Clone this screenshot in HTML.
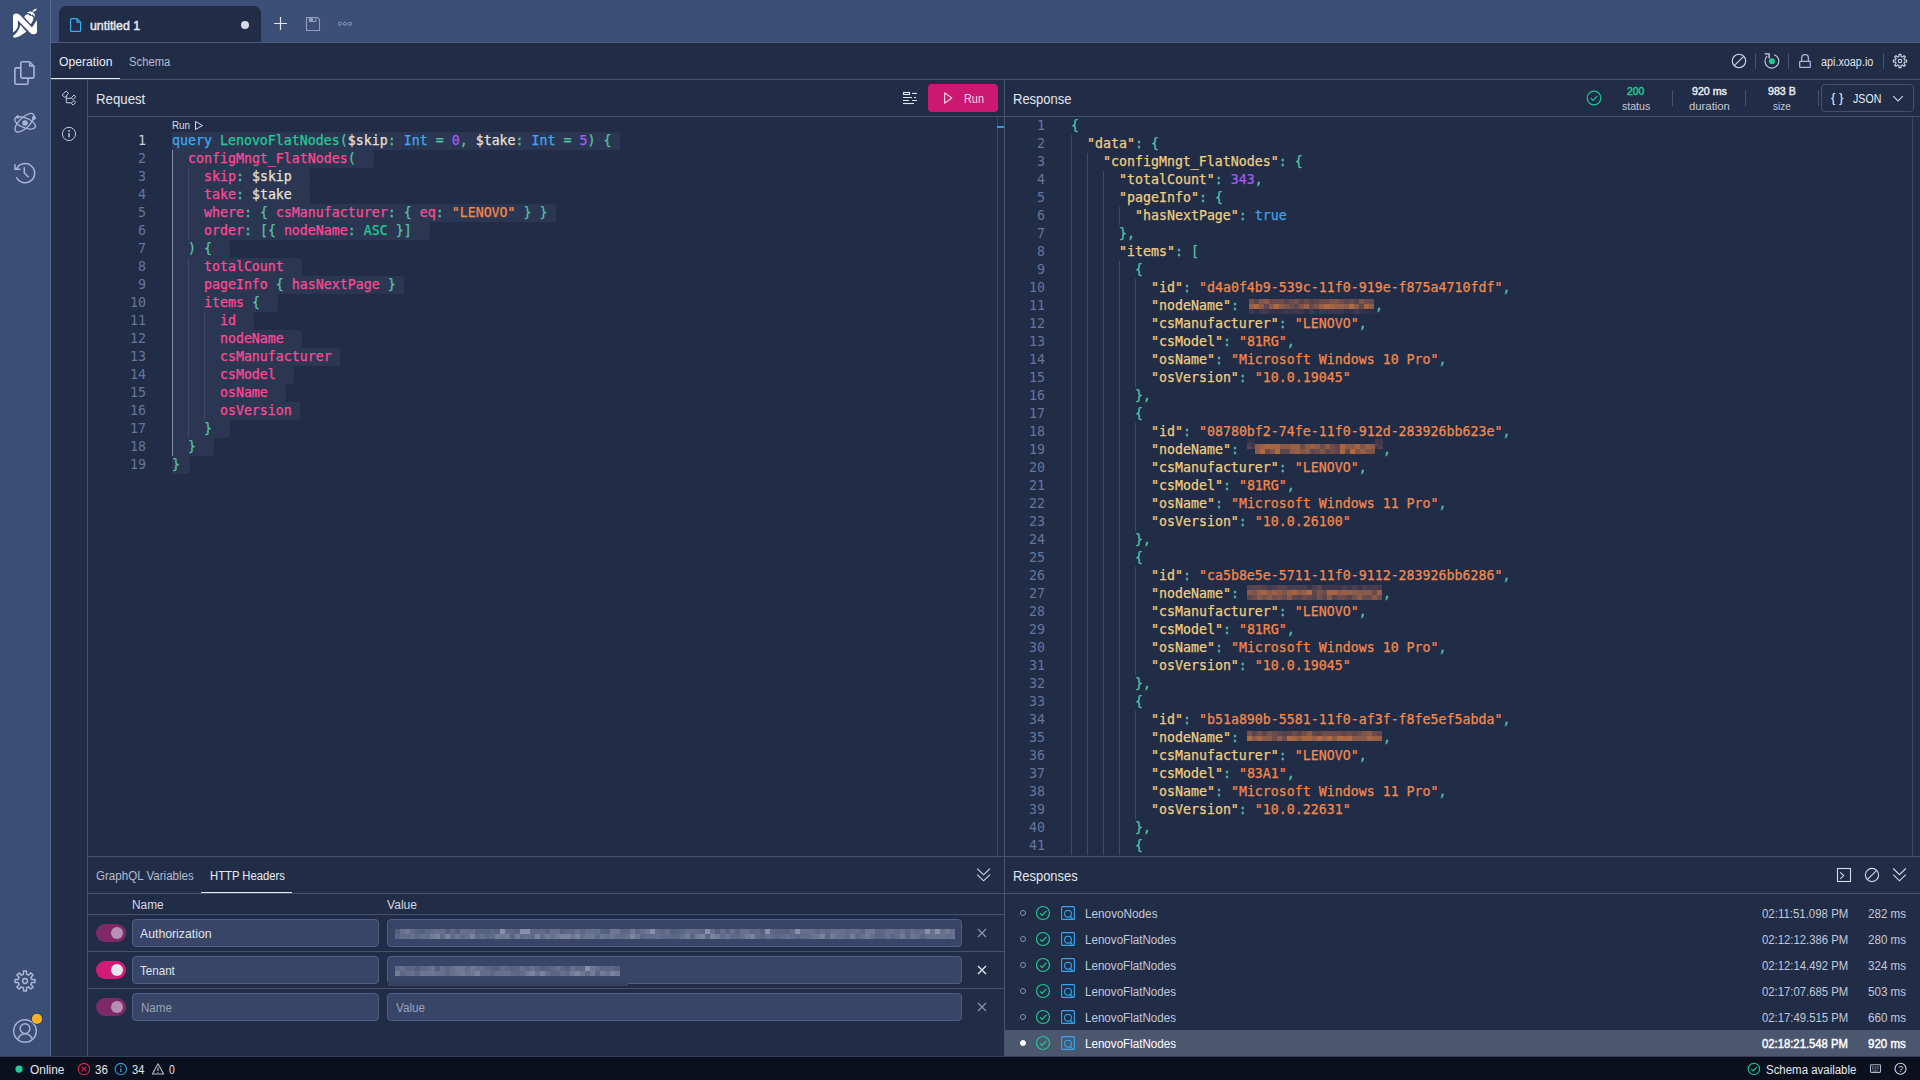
<!DOCTYPE html>
<html lang="en">
<head>
<meta charset="utf-8">
<title>untitled 1</title>
<style>
*{box-sizing:border-box;margin:0;padding:0}
html,body{width:1920px;height:1080px;overflow:hidden;background:#212c47;font-family:"Liberation Sans",sans-serif;color:#d5d9e6;font-size:12px}
.abs,.sel,.ln,.cl,.ig,.mz,.rrow,.txt,.vl,.hl,.ico{position:absolute}
#sidebar{position:absolute;left:0;top:0;width:51px;height:1056px;background:#3b4e75;border-right:1px solid #596a8c}
#topbar{position:absolute;left:51px;top:0;width:1869px;height:43px;background:#3c4f76;border-bottom:1px solid #4d5c7d}
#tab{position:absolute;left:59px;top:6px;width:202px;height:36px;background:#212c47;border-radius:7px 7px 0 0}
#status{position:absolute;left:0;top:1056px;width:1920px;height:24px;background:#0b101e;border-top:1px solid #343f58}
.hl{height:1px;background:#46536f}
.vl{width:1px;background:#46536f}
.txt{white-space:pre;line-height:1}
/* code */
.ln,.cl{font-family:"DejaVu Sans Mono","Liberation Mono",monospace;font-size:13.288px;line-height:18px;height:18px;white-space:pre}
.ln{width:48px;text-align:right;color:#66769a}
.ln.act{color:#c8cee0}
.cl{color:#e8e0d5;-webkit-text-stroke:0.25px}
.sel{left:172px;height:18px;background:#2b3653;border-radius:0 3px 3px 0}
.ig{width:1px;background:#3d4966}
.ig.a{background:#8791b3}
.k{color:#3fa7f2}.f{color:#20cd97}.p{color:#fb4b96}.t{color:#56c4a4}.v{color:#e8e0d5}.n{color:#a45bf4}.s{color:#f5894a}.y{color:#eecf7f}.b{color:#3ea3e6}
/* inputs */
.inp{position:absolute;height:28px;background:#384566;border:1px solid #4f5f86;border-radius:4px;color:#dfe3ee;font-size:13px;line-height:28px;padding-left:8px}
.inp.ph{color:#99a3bd}
.tog{position:absolute;width:30px;height:18px;border-radius:9px;background:#d41b78}
.tog i{position:absolute;right:3px;top:3px;width:12px;height:12px;border-radius:6px;background:#e6e6ee}
.tog.dim{background:#7f2a68}.tog.dim i{background:#b78fb4}
/* responses list */
.rrow{left:1005px;width:915px;height:26px;color:#c3c9da;font-size:12.5px}
.rrow.on{background:#4b566f;color:#fff}
.rrow .dot{position:absolute;left:15px;top:10px;width:6px;height:6px;border-radius:3px;border:1px solid #8892ad}
.rrow.on .dot{background:#fff;border-color:#fff}
.rrow .ck{position:absolute;left:30px;top:5px}
.rrow .qi{position:absolute;left:55px;top:5px}
.rrow .rn{position:absolute;left:79px;top:0;line-height:26px}
.rrow .rt{position:absolute;right:71px;top:0;line-height:26px}
.rrow .rd{position:absolute;right:14px;top:0;line-height:26px}
</style>
</head>
<body>
<div id="sidebar"></div>
<svg class="ico" style="left:0;top:0" width="50" height="50" viewBox="0 0 50 50">
<path d="M13 32.6 L13 16.9 Q13 13.6 16.4 13.6 Q18.5 13.6 19.9 15.1 L32 27.4 L36.9 20.1 L37 31 Q37 34.3 33.6 34.3 Q31.5 34.3 30.1 32.8 L17.9 20.3 L17.9 26.6 Q16.9 30.3 13 32.6 Z" fill="#fff"/>
<path d="M20.5 24.8 L26.3 31.7 Q20.5 36.4 15.2 37.7 Q12.4 37.9 13.4 35.6 Q18.6 32 20.5 24.8 Z" fill="#fff"/>
<path d="M24.2 16.9 Q25 14.6 27.6 14.2 L28.9 14.4 L29.9 16.2 L31 15.6 L32.2 16.3 L33.4 17.4 Q33.9 19.6 30.7 24.2 Z" fill="#fff"/>
<path d="M26.9 12.7 Q29.6 10.6 32.6 12 Q35.4 13.6 34.9 17 L33.6 15.4 L32.2 14.6 L31.2 14.9 L30.2 13.6 L28.8 13.3 Z" fill="#fff"/>
<path d="M32.2 10.9 Q33.6 8.9 36.8 8.4 Q36.8 10.4 34.2 11.5 Q32.9 11.9 32.2 10.9 Z" fill="#fff"/>
</svg>
<svg class="ico" style="left:0;top:50px" width="50" height="50" viewBox="0 50 50 50" fill="none" stroke="#aab5d5" stroke-width="1.6" stroke-linejoin="round">
<path d="M22.3 61.7 H29.5 L34 66.2 V76.6 Q34 78.1 32.5 78.1 H22.3 Q20.8 78.1 20.8 76.6 V63.2 Q20.8 61.7 22.3 61.7 Z"/>
<path d="M29.7 62 V66 H33.8"/>
<path d="M20.8 67.9 H16.4 Q14.9 67.9 14.9 69.4 V82.7 Q14.9 84.2 16.4 84.2 H26.5 Q28 84.2 28 82.7 V78.1"/>
</svg>
<svg class="ico" style="left:0;top:100px" width="50" height="50" viewBox="0 100 50 50" fill="none" stroke="#aab5d5" stroke-width="1.3">
<ellipse cx="24.5" cy="122.7" rx="12.2" ry="5.2" transform="rotate(-44 24.5 122.7)"/>
<ellipse cx="25.1" cy="122.9" rx="11" ry="4.9" transform="rotate(22 25.1 122.9)"/>
<circle cx="25" cy="123" r="2.8" fill="#aab5d5" stroke="none"/>
<circle cx="17.6" cy="116.9" r="1.7" fill="#aab5d5" stroke="none"/>
<circle cx="33.9" cy="118" r="2.1" fill="#aab5d5" stroke="none"/>
</svg>
<svg class="ico" style="left:0;top:150px" width="50" height="50" viewBox="0 150 50 50" fill="none" stroke="#aab5d5" stroke-width="1.5">
<path d="M16.5 168.8 A9.6 9.6 0 1 1 16.4 177.3"/>
<path d="M15 164.2 V169.3 H20.4"/>
<path d="M24.3 167.2 V173 L28.7 177.3"/>
</svg>
<svg class="ico" style="left:0;top:956px" width="50" height="50" viewBox="0 956 50 50" fill="none" stroke="#aab5d5" stroke-width="1.5" stroke-linejoin="round">
<path d="M23.39 974.29 L23.58 971.00 L26.42 971.00 L26.61 974.29 L28.61 975.12 L31.06 972.92 L33.08 974.94 L30.88 977.39 L31.71 979.39 L35.00 979.58 L35.00 982.42 L31.71 982.61 L30.88 984.61 L33.08 987.06 L31.06 989.08 L28.61 986.88 L26.61 987.71 L26.42 991.00 L23.58 991.00 L23.39 987.71 L21.39 986.88 L18.94 989.08 L16.92 987.06 L19.12 984.61 L18.29 982.61 L15.00 982.42 L15.00 979.58 L18.29 979.39 L19.12 977.39 L16.92 974.94 L18.94 972.92 L21.39 975.12 Z"/><circle cx="25" cy="981" r="2.4"/>
</svg>
<svg class="ico" style="left:0;top:1006px" width="50" height="50" viewBox="0 1006 50 50" fill="none" stroke="#aab5d5" stroke-width="1.4">
<circle cx="25" cy="1031" r="11.3"/><circle cx="25" cy="1028.6" r="4.9"/>
<path d="M17.6 1039.6 Q19.8 1033.8 25 1033.8 Q30.2 1033.8 32.4 1039.6"/>
<circle cx="37" cy="1018.9" r="5.9" fill="#24376a" stroke="none"/>
<circle cx="37" cy="1018.9" r="5.1" fill="#f9b224" stroke="none"/>
</svg>
<div id="topbar"></div>
<div id="status"></div>
<div id="tab"></div>
<div class="abs" style="left:241px;top:21px;width:8px;height:8px;border-radius:4px;background:#d8dbe6"></div>

<!-- operation tabs -->
<div class="hl" style="left:51px;top:79px;width:1869px"></div>
<div class="hl" style="left:51px;top:78px;width:69px;background:#e8ebf2"></div>

<!-- left icon col -->
<div class="vl" style="left:87px;top:80px;height:976px"></div>
<!-- request header -->
<div class="hl" style="left:88px;top:116px;width:1832px"></div>
<div class="abs" style="left:928px;top:84px;width:70px;height:28px;border-radius:4px;background:#cc1871"></div>
<div class="vl" style="left:1004px;top:80px;height:976px"></div>
<div class="vl" style="left:997px;top:117px;height:739px;background:#3a4662"></div>
<div class="vl" style="left:1912px;top:117px;height:739px;background:#3a4662"></div>
<div class="abs" style="left:997px;top:126px;width:7px;height:2px;background:#3a9bdc"></div>

<!-- response header -->
<div class="vl" style="left:1672px;top:90px;height:16px"></div>
<div class="vl" style="left:1745px;top:90px;height:16px"></div>
<div class="vl" style="left:1818px;top:90px;height:16px"></div>
<div class="abs" style="left:1821px;top:84px;width:93px;height:28px;border:1px solid #43506e;border-radius:4px"></div>

<!-- editors -->
<div class="sel" style="top:132px;width:448.0px"></div>
<div class="sel" style="top:150px;width:201.7px"></div>
<div class="sel" style="top:168px;width:137.7px"></div>
<div class="sel" style="top:186px;width:137.7px"></div>
<div class="sel" style="top:204px;width:384.0px"></div>
<div class="sel" style="top:222px;width:257.7px"></div>
<div class="sel" style="top:240px;width:57.7px"></div>
<div class="sel" style="top:258px;width:129.7px"></div>
<div class="sel" style="top:276px;width:232.0px"></div>
<div class="sel" style="top:294px;width:105.7px"></div>
<div class="sel" style="top:312px;width:81.7px"></div>
<div class="sel" style="top:330px;width:129.7px"></div>
<div class="sel" style="top:348px;width:168.0px"></div>
<div class="sel" style="top:366px;width:121.7px"></div>
<div class="sel" style="top:384px;width:113.7px"></div>
<div class="sel" style="top:402px;width:128.0px"></div>
<div class="sel" style="top:420px;width:57.7px"></div>
<div class="sel" style="top:438px;width:41.7px"></div>
<div class="sel" style="top:456px;width:17.8px"></div>
<div class="ln act" style="top:132px;left:98px">1</div>
<div class="cl" style="top:132px;left:172px"><span class="k">query</span> <span class="f">LenovoFlatNodes</span><span class="t">(</span><span class="v">$skip</span><span class="t">:</span> <span class="k">Int</span> <span class="t">=</span> <span class="n">0</span><span class="t">,</span> <span class="v">$take</span><span class="t">:</span> <span class="k">Int</span> <span class="t">=</span> <span class="n">5</span><span class="t">)</span> <span class="t">{</span></div>
<div class="ln" style="top:150px;left:98px">2</div>
<div class="cl" style="top:150px;left:172px">  <span class="p">configMngt_FlatNodes</span><span class="t">(</span></div>
<div class="ln" style="top:168px;left:98px">3</div>
<div class="cl" style="top:168px;left:172px">    <span class="p">skip</span><span class="t">:</span> <span class="v">$skip</span></div>
<div class="ln" style="top:186px;left:98px">4</div>
<div class="cl" style="top:186px;left:172px">    <span class="p">take</span><span class="t">:</span> <span class="v">$take</span></div>
<div class="ln" style="top:204px;left:98px">5</div>
<div class="cl" style="top:204px;left:172px">    <span class="p">where</span><span class="t">:</span> <span class="t">{</span> <span class="p">csManufacturer</span><span class="t">:</span> <span class="t">{</span> <span class="p">eq</span><span class="t">:</span> <span class="s">"LENOVO"</span> <span class="t">}</span> <span class="t">}</span></div>
<div class="ln" style="top:222px;left:98px">6</div>
<div class="cl" style="top:222px;left:172px">    <span class="p">order</span><span class="t">:</span> <span class="t">[{</span> <span class="p">nodeName</span><span class="t">:</span> <span class="f">ASC</span> <span class="t">}]</span></div>
<div class="ln" style="top:240px;left:98px">7</div>
<div class="cl" style="top:240px;left:172px">  <span class="t">)</span> <span class="t">{</span></div>
<div class="ln" style="top:258px;left:98px">8</div>
<div class="cl" style="top:258px;left:172px">    <span class="p">totalCount</span></div>
<div class="ln" style="top:276px;left:98px">9</div>
<div class="cl" style="top:276px;left:172px">    <span class="p">pageInfo</span> <span class="t">{</span> <span class="p">hasNextPage</span> <span class="t">}</span></div>
<div class="ln" style="top:294px;left:98px">10</div>
<div class="cl" style="top:294px;left:172px">    <span class="p">items</span> <span class="t">{</span></div>
<div class="ln" style="top:312px;left:98px">11</div>
<div class="cl" style="top:312px;left:172px">      <span class="p">id</span></div>
<div class="ln" style="top:330px;left:98px">12</div>
<div class="cl" style="top:330px;left:172px">      <span class="p">nodeName</span></div>
<div class="ln" style="top:348px;left:98px">13</div>
<div class="cl" style="top:348px;left:172px">      <span class="p">csManufacturer</span></div>
<div class="ln" style="top:366px;left:98px">14</div>
<div class="cl" style="top:366px;left:172px">      <span class="p">csModel</span></div>
<div class="ln" style="top:384px;left:98px">15</div>
<div class="cl" style="top:384px;left:172px">      <span class="p">osName</span></div>
<div class="ln" style="top:402px;left:98px">16</div>
<div class="cl" style="top:402px;left:172px">      <span class="p">osVersion</span></div>
<div class="ln" style="top:420px;left:98px">17</div>
<div class="cl" style="top:420px;left:172px">    <span class="t">}</span></div>
<div class="ln" style="top:438px;left:98px">18</div>
<div class="cl" style="top:438px;left:172px">  <span class="t">}</span></div>
<div class="ln" style="top:456px;left:98px">19</div>
<div class="cl" style="top:456px;left:172px"><span class="t">}</span></div>
<div class="ig a" style="left:172px;top:150px;height:306px"></div>
<div class="ig" style="left:188px;top:168px;height:72px"></div>
<div class="ig" style="left:188px;top:258px;height:180px"></div>
<div class="ig" style="left:204px;top:312px;height:108px"></div>
<div class="ln" style="top:117px;left:1005px;width:40px">1</div>
<div class="cl" style="top:117px;left:1071px"><span class="t">{</span></div>
<div class="ln" style="top:135px;left:1005px;width:40px">2</div>
<div class="cl" style="top:135px;left:1087px"><span class="y">"data"</span><span class="t">:</span> <span class="t">{</span></div>
<div class="ig" style="left:1071px;top:135px;height:18px"></div>
<div class="ln" style="top:153px;left:1005px;width:40px">3</div>
<div class="cl" style="top:153px;left:1103px"><span class="y">"configMngt_FlatNodes"</span><span class="t">:</span> <span class="t">{</span></div>
<div class="ig" style="left:1071px;top:153px;height:18px"></div>
<div class="ig" style="left:1087px;top:153px;height:18px"></div>
<div class="ln" style="top:171px;left:1005px;width:40px">4</div>
<div class="cl" style="top:171px;left:1119px"><span class="y">"totalCount"</span><span class="t">:</span> <span class="n">343</span><span class="t">,</span></div>
<div class="ig" style="left:1071px;top:171px;height:18px"></div>
<div class="ig" style="left:1087px;top:171px;height:18px"></div>
<div class="ig" style="left:1103px;top:171px;height:18px"></div>
<div class="ln" style="top:189px;left:1005px;width:40px">5</div>
<div class="cl" style="top:189px;left:1119px"><span class="y">"pageInfo"</span><span class="t">:</span> <span class="t">{</span></div>
<div class="ig" style="left:1071px;top:189px;height:18px"></div>
<div class="ig" style="left:1087px;top:189px;height:18px"></div>
<div class="ig" style="left:1103px;top:189px;height:18px"></div>
<div class="ln" style="top:207px;left:1005px;width:40px">6</div>
<div class="cl" style="top:207px;left:1135px"><span class="y">"hasNextPage"</span><span class="t">:</span> <span class="b">true</span></div>
<div class="ig" style="left:1071px;top:207px;height:18px"></div>
<div class="ig" style="left:1087px;top:207px;height:18px"></div>
<div class="ig" style="left:1103px;top:207px;height:18px"></div>
<div class="ig" style="left:1119px;top:207px;height:18px"></div>
<div class="ln" style="top:225px;left:1005px;width:40px">7</div>
<div class="cl" style="top:225px;left:1119px"><span class="t">},</span></div>
<div class="ig" style="left:1071px;top:225px;height:18px"></div>
<div class="ig" style="left:1087px;top:225px;height:18px"></div>
<div class="ig" style="left:1103px;top:225px;height:18px"></div>
<div class="ln" style="top:243px;left:1005px;width:40px">8</div>
<div class="cl" style="top:243px;left:1119px"><span class="y">"items"</span><span class="t">:</span> <span class="t">[</span></div>
<div class="ig" style="left:1071px;top:243px;height:18px"></div>
<div class="ig" style="left:1087px;top:243px;height:18px"></div>
<div class="ig" style="left:1103px;top:243px;height:18px"></div>
<div class="ln" style="top:261px;left:1005px;width:40px">9</div>
<div class="cl" style="top:261px;left:1135px"><span class="t">{</span></div>
<div class="ig" style="left:1071px;top:261px;height:18px"></div>
<div class="ig" style="left:1087px;top:261px;height:18px"></div>
<div class="ig" style="left:1103px;top:261px;height:18px"></div>
<div class="ig" style="left:1119px;top:261px;height:18px"></div>
<div class="ln" style="top:279px;left:1005px;width:40px">10</div>
<div class="cl" style="top:279px;left:1151px"><span class="y">"id"</span><span class="t">:</span> <span class="s">"d4a0f4b9-539c-11f0-919e-f875a4710fdf"</span><span class="t">,</span></div>
<div class="ig" style="left:1071px;top:279px;height:18px"></div>
<div class="ig" style="left:1087px;top:279px;height:18px"></div>
<div class="ig" style="left:1103px;top:279px;height:18px"></div>
<div class="ig" style="left:1119px;top:279px;height:18px"></div>
<div class="ig" style="left:1135px;top:279px;height:18px"></div>
<div class="ln" style="top:297px;left:1005px;width:40px">11</div>
<svg class="mz" style="left:1249px;top:299px" width="125" height="15" viewBox="0 0 125 15"><rect x="0" y="0" width="5" height="5" fill="#74504a"/><rect x="5" y="0" width="5" height="5" fill="#5f464c"/><rect x="10" y="0" width="5" height="5" fill="#7d5549"/><rect x="15" y="0" width="5" height="5" fill="#8a5a48"/><rect x="20" y="0" width="5" height="5" fill="#6b4b4c"/><rect x="25" y="0" width="5" height="5" fill="#6b4b4c"/><rect x="30" y="0" width="5" height="5" fill="#6b4b4c"/><rect x="35" y="0" width="5" height="5" fill="#56434e"/><rect x="40" y="0" width="5" height="5" fill="#6b4b4c"/><rect x="45" y="0" width="5" height="5" fill="#74504a"/><rect x="50" y="0" width="5" height="5" fill="#56434e"/><rect x="55" y="0" width="5" height="5" fill="#6b4b4c"/><rect x="60" y="0" width="5" height="5" fill="#56434e"/><rect x="65" y="0" width="5" height="5" fill="#5f464c"/><rect x="70" y="0" width="5" height="5" fill="#6b4b4c"/><rect x="75" y="0" width="5" height="5" fill="#6b4b4c"/><rect x="80" y="0" width="5" height="5" fill="#7d5549"/><rect x="85" y="0" width="5" height="5" fill="#7d5549"/><rect x="90" y="0" width="5" height="5" fill="#6b4b4c"/><rect x="95" y="0" width="5" height="5" fill="#5f464c"/><rect x="100" y="0" width="5" height="5" fill="#6b4b4c"/><rect x="105" y="0" width="5" height="5" fill="#56434e"/><rect x="110" y="0" width="5" height="5" fill="#7d5549"/><rect x="115" y="0" width="5" height="5" fill="#6b4b4c"/><rect x="120" y="0" width="5" height="5" fill="#6b4b4c"/><rect x="0" y="5" width="5" height="5" fill="#9a6046"/><rect x="5" y="5" width="5" height="5" fill="#b06a42"/><rect x="10" y="5" width="5" height="5" fill="#8a5a4a"/><rect x="15" y="5" width="5" height="5" fill="#5f464c"/><rect x="20" y="5" width="5" height="5" fill="#8a5a4a"/><rect x="25" y="5" width="5" height="5" fill="#b06a42"/><rect x="30" y="5" width="5" height="5" fill="#8a5a4a"/><rect x="35" y="5" width="5" height="5" fill="#7d5549"/><rect x="40" y="5" width="5" height="5" fill="#6b4b4c"/><rect x="45" y="5" width="5" height="5" fill="#5f464c"/><rect x="50" y="5" width="5" height="5" fill="#7d5549"/><rect x="55" y="5" width="5" height="5" fill="#9a6046"/><rect x="60" y="5" width="5" height="5" fill="#6b4b4c"/><rect x="65" y="5" width="5" height="5" fill="#7d5549"/><rect x="70" y="5" width="5" height="5" fill="#9a6046"/><rect x="75" y="5" width="5" height="5" fill="#b06a42"/><rect x="80" y="5" width="5" height="5" fill="#a86640"/><rect x="85" y="5" width="5" height="5" fill="#9a6046"/><rect x="90" y="5" width="5" height="5" fill="#9a6046"/><rect x="95" y="5" width="5" height="5" fill="#8a5a4a"/><rect x="100" y="5" width="5" height="5" fill="#b06a42"/><rect x="105" y="5" width="5" height="5" fill="#8a5a4a"/><rect x="110" y="5" width="5" height="5" fill="#5f464c"/><rect x="115" y="5" width="5" height="5" fill="#a86640"/><rect x="120" y="5" width="5" height="5" fill="#8a5a4a"/><rect x="0" y="10" width="5" height="5" fill="#3a3850"/><rect x="5" y="10" width="5" height="5" fill="#2c304b"/><rect x="10" y="10" width="5" height="5" fill="#413a4f"/><rect x="15" y="10" width="5" height="5" fill="#413a4f"/><rect x="20" y="10" width="5" height="5" fill="#33334c"/><rect x="25" y="10" width="5" height="5" fill="#33334c"/><rect x="30" y="10" width="5" height="5" fill="#33334c"/><rect x="35" y="10" width="5" height="5" fill="#3a3850"/><rect x="40" y="10" width="5" height="5" fill="#3a3850"/><rect x="45" y="10" width="5" height="5" fill="#413a4f"/><rect x="50" y="10" width="5" height="5" fill="#3a3850"/><rect x="55" y="10" width="5" height="5" fill="#2c304b"/><rect x="60" y="10" width="5" height="5" fill="#413a4f"/><rect x="65" y="10" width="5" height="5" fill="#2c304b"/><rect x="70" y="10" width="5" height="5" fill="#413a4f"/><rect x="75" y="10" width="5" height="5" fill="#3a3850"/><rect x="80" y="10" width="5" height="5" fill="#3a3850"/><rect x="85" y="10" width="5" height="5" fill="#3a3850"/><rect x="90" y="10" width="5" height="5" fill="#3a3850"/><rect x="95" y="10" width="5" height="5" fill="#2c304b"/><rect x="100" y="10" width="5" height="5" fill="#33334c"/><rect x="105" y="10" width="5" height="5" fill="#413a4f"/><rect x="110" y="10" width="5" height="5" fill="#33334c"/><rect x="115" y="10" width="5" height="5" fill="#2c304b"/><rect x="120" y="10" width="5" height="5" fill="#2c304b"/></svg>
<div class="cl" style="top:297px;left:1375px"><span class="t">,</span></div>
<div class="cl" style="top:297px;left:1151px"><span class="y">"nodeName"</span><span class="t">:</span> </div>
<div class="ig" style="left:1071px;top:297px;height:18px"></div>
<div class="ig" style="left:1087px;top:297px;height:18px"></div>
<div class="ig" style="left:1103px;top:297px;height:18px"></div>
<div class="ig" style="left:1119px;top:297px;height:18px"></div>
<div class="ig" style="left:1135px;top:297px;height:18px"></div>
<div class="ln" style="top:315px;left:1005px;width:40px">12</div>
<div class="cl" style="top:315px;left:1151px"><span class="y">"csManufacturer"</span><span class="t">:</span> <span class="s">"LENOVO"</span><span class="t">,</span></div>
<div class="ig" style="left:1071px;top:315px;height:18px"></div>
<div class="ig" style="left:1087px;top:315px;height:18px"></div>
<div class="ig" style="left:1103px;top:315px;height:18px"></div>
<div class="ig" style="left:1119px;top:315px;height:18px"></div>
<div class="ig" style="left:1135px;top:315px;height:18px"></div>
<div class="ln" style="top:333px;left:1005px;width:40px">13</div>
<div class="cl" style="top:333px;left:1151px"><span class="y">"csModel"</span><span class="t">:</span> <span class="s">"81RG"</span><span class="t">,</span></div>
<div class="ig" style="left:1071px;top:333px;height:18px"></div>
<div class="ig" style="left:1087px;top:333px;height:18px"></div>
<div class="ig" style="left:1103px;top:333px;height:18px"></div>
<div class="ig" style="left:1119px;top:333px;height:18px"></div>
<div class="ig" style="left:1135px;top:333px;height:18px"></div>
<div class="ln" style="top:351px;left:1005px;width:40px">14</div>
<div class="cl" style="top:351px;left:1151px"><span class="y">"osName"</span><span class="t">:</span> <span class="s">"Microsoft Windows 10 Pro"</span><span class="t">,</span></div>
<div class="ig" style="left:1071px;top:351px;height:18px"></div>
<div class="ig" style="left:1087px;top:351px;height:18px"></div>
<div class="ig" style="left:1103px;top:351px;height:18px"></div>
<div class="ig" style="left:1119px;top:351px;height:18px"></div>
<div class="ig" style="left:1135px;top:351px;height:18px"></div>
<div class="ln" style="top:369px;left:1005px;width:40px">15</div>
<div class="cl" style="top:369px;left:1151px"><span class="y">"osVersion"</span><span class="t">:</span> <span class="s">"10.0.19045"</span></div>
<div class="ig" style="left:1071px;top:369px;height:18px"></div>
<div class="ig" style="left:1087px;top:369px;height:18px"></div>
<div class="ig" style="left:1103px;top:369px;height:18px"></div>
<div class="ig" style="left:1119px;top:369px;height:18px"></div>
<div class="ig" style="left:1135px;top:369px;height:18px"></div>
<div class="ln" style="top:387px;left:1005px;width:40px">16</div>
<div class="cl" style="top:387px;left:1135px"><span class="t">},</span></div>
<div class="ig" style="left:1071px;top:387px;height:18px"></div>
<div class="ig" style="left:1087px;top:387px;height:18px"></div>
<div class="ig" style="left:1103px;top:387px;height:18px"></div>
<div class="ig" style="left:1119px;top:387px;height:18px"></div>
<div class="ln" style="top:405px;left:1005px;width:40px">17</div>
<div class="cl" style="top:405px;left:1135px"><span class="t">{</span></div>
<div class="ig" style="left:1071px;top:405px;height:18px"></div>
<div class="ig" style="left:1087px;top:405px;height:18px"></div>
<div class="ig" style="left:1103px;top:405px;height:18px"></div>
<div class="ig" style="left:1119px;top:405px;height:18px"></div>
<div class="ln" style="top:423px;left:1005px;width:40px">18</div>
<div class="cl" style="top:423px;left:1151px"><span class="y">"id"</span><span class="t">:</span> <span class="s">"08780bf2-74fe-11f0-912d-283926bb623e"</span><span class="t">,</span></div>
<div class="ig" style="left:1071px;top:423px;height:18px"></div>
<div class="ig" style="left:1087px;top:423px;height:18px"></div>
<div class="ig" style="left:1103px;top:423px;height:18px"></div>
<div class="ig" style="left:1119px;top:423px;height:18px"></div>
<div class="ig" style="left:1135px;top:423px;height:18px"></div>
<div class="ln" style="top:441px;left:1005px;width:40px">19</div>
<svg class="mz" style="left:1255px;top:444px" width="120" height="10" viewBox="0 0 120 10"><rect x="0" y="0" width="5" height="5" fill="#8a5a4a"/><rect x="5" y="0" width="5" height="5" fill="#9a6046"/><rect x="10" y="0" width="5" height="5" fill="#a86640"/><rect x="15" y="0" width="5" height="5" fill="#a86640"/><rect x="20" y="0" width="5" height="5" fill="#a86640"/><rect x="25" y="0" width="5" height="5" fill="#8a5a4a"/><rect x="30" y="0" width="5" height="5" fill="#8a5a4a"/><rect x="35" y="0" width="5" height="5" fill="#9a6046"/><rect x="40" y="0" width="5" height="5" fill="#9a6046"/><rect x="45" y="0" width="5" height="5" fill="#6b4b4c"/><rect x="50" y="0" width="5" height="5" fill="#8a5a4a"/><rect x="55" y="0" width="5" height="5" fill="#9a6046"/><rect x="60" y="0" width="5" height="5" fill="#8a5a4a"/><rect x="65" y="0" width="5" height="5" fill="#6b4b4c"/><rect x="70" y="0" width="5" height="5" fill="#8a5a4a"/><rect x="75" y="0" width="5" height="5" fill="#6b4b4c"/><rect x="80" y="0" width="5" height="5" fill="#5f464c"/><rect x="85" y="0" width="5" height="5" fill="#a86640"/><rect x="90" y="0" width="5" height="5" fill="#8a5a4a"/><rect x="95" y="0" width="5" height="5" fill="#8a5a4a"/><rect x="100" y="0" width="5" height="5" fill="#a86640"/><rect x="105" y="0" width="5" height="5" fill="#7d5549"/><rect x="110" y="0" width="5" height="5" fill="#9a6046"/><rect x="115" y="0" width="5" height="5" fill="#8a5a4a"/><rect x="0" y="5" width="5" height="5" fill="#8a5a4a"/><rect x="5" y="5" width="5" height="5" fill="#b06a42"/><rect x="10" y="5" width="5" height="5" fill="#6b4b4c"/><rect x="15" y="5" width="5" height="5" fill="#7d5549"/><rect x="20" y="5" width="5" height="5" fill="#b06a42"/><rect x="25" y="5" width="5" height="5" fill="#5f464c"/><rect x="30" y="5" width="5" height="5" fill="#5f464c"/><rect x="35" y="5" width="5" height="5" fill="#8a5a4a"/><rect x="40" y="5" width="5" height="5" fill="#9a6046"/><rect x="45" y="5" width="5" height="5" fill="#7d5549"/><rect x="50" y="5" width="5" height="5" fill="#8a5a4a"/><rect x="55" y="5" width="5" height="5" fill="#5f464c"/><rect x="60" y="5" width="5" height="5" fill="#6b4b4c"/><rect x="65" y="5" width="5" height="5" fill="#7d5549"/><rect x="70" y="5" width="5" height="5" fill="#5f464c"/><rect x="75" y="5" width="5" height="5" fill="#6b4b4c"/><rect x="80" y="5" width="5" height="5" fill="#5f464c"/><rect x="85" y="5" width="5" height="5" fill="#a86640"/><rect x="90" y="5" width="5" height="5" fill="#5f464c"/><rect x="95" y="5" width="5" height="5" fill="#b06a42"/><rect x="100" y="5" width="5" height="5" fill="#7d5549"/><rect x="105" y="5" width="5" height="5" fill="#9a6046"/><rect x="110" y="5" width="5" height="5" fill="#7d5549"/><rect x="115" y="5" width="5" height="5" fill="#7d5549"/></svg>
<svg class="mz" style="left:1247px;top:439px" width="8" height="10" viewBox="0 0 8 10"><rect x="0" y="0" width="4" height="4" fill="#33334c"/><rect x="4" y="0" width="4" height="4" fill="#33334c"/><rect x="0" y="4" width="4" height="4" fill="#4a3f50"/><rect x="4" y="4" width="4" height="4" fill="#3e374c"/><rect x="0" y="8" width="4" height="4" fill="#5a4650"/><rect x="4" y="8" width="4" height="4" fill="#453b4e"/></svg>
<svg class="mz" style="left:1375px;top:439px" width="8" height="10" viewBox="0 0 8 10"><rect x="0" y="0" width="4" height="4" fill="#413a4f"/><rect x="4" y="0" width="4" height="4" fill="#413a4f"/><rect x="0" y="4" width="4" height="4" fill="#4a3f50"/><rect x="4" y="4" width="4" height="4" fill="#453b4e"/><rect x="0" y="8" width="4" height="4" fill="#3e374c"/><rect x="4" y="8" width="4" height="4" fill="#5a4650"/></svg>
<div class="cl" style="top:441px;left:1383px"><span class="t">,</span></div>
<div class="cl" style="top:441px;left:1151px"><span class="y">"nodeName"</span><span class="t">:</span> </div>
<div class="ig" style="left:1071px;top:441px;height:18px"></div>
<div class="ig" style="left:1087px;top:441px;height:18px"></div>
<div class="ig" style="left:1103px;top:441px;height:18px"></div>
<div class="ig" style="left:1119px;top:441px;height:18px"></div>
<div class="ig" style="left:1135px;top:441px;height:18px"></div>
<div class="ln" style="top:459px;left:1005px;width:40px">20</div>
<div class="cl" style="top:459px;left:1151px"><span class="y">"csManufacturer"</span><span class="t">:</span> <span class="s">"LENOVO"</span><span class="t">,</span></div>
<div class="ig" style="left:1071px;top:459px;height:18px"></div>
<div class="ig" style="left:1087px;top:459px;height:18px"></div>
<div class="ig" style="left:1103px;top:459px;height:18px"></div>
<div class="ig" style="left:1119px;top:459px;height:18px"></div>
<div class="ig" style="left:1135px;top:459px;height:18px"></div>
<div class="ln" style="top:477px;left:1005px;width:40px">21</div>
<div class="cl" style="top:477px;left:1151px"><span class="y">"csModel"</span><span class="t">:</span> <span class="s">"81RG"</span><span class="t">,</span></div>
<div class="ig" style="left:1071px;top:477px;height:18px"></div>
<div class="ig" style="left:1087px;top:477px;height:18px"></div>
<div class="ig" style="left:1103px;top:477px;height:18px"></div>
<div class="ig" style="left:1119px;top:477px;height:18px"></div>
<div class="ig" style="left:1135px;top:477px;height:18px"></div>
<div class="ln" style="top:495px;left:1005px;width:40px">22</div>
<div class="cl" style="top:495px;left:1151px"><span class="y">"osName"</span><span class="t">:</span> <span class="s">"Microsoft Windows 11 Pro"</span><span class="t">,</span></div>
<div class="ig" style="left:1071px;top:495px;height:18px"></div>
<div class="ig" style="left:1087px;top:495px;height:18px"></div>
<div class="ig" style="left:1103px;top:495px;height:18px"></div>
<div class="ig" style="left:1119px;top:495px;height:18px"></div>
<div class="ig" style="left:1135px;top:495px;height:18px"></div>
<div class="ln" style="top:513px;left:1005px;width:40px">23</div>
<div class="cl" style="top:513px;left:1151px"><span class="y">"osVersion"</span><span class="t">:</span> <span class="s">"10.0.26100"</span></div>
<div class="ig" style="left:1071px;top:513px;height:18px"></div>
<div class="ig" style="left:1087px;top:513px;height:18px"></div>
<div class="ig" style="left:1103px;top:513px;height:18px"></div>
<div class="ig" style="left:1119px;top:513px;height:18px"></div>
<div class="ig" style="left:1135px;top:513px;height:18px"></div>
<div class="ln" style="top:531px;left:1005px;width:40px">24</div>
<div class="cl" style="top:531px;left:1135px"><span class="t">},</span></div>
<div class="ig" style="left:1071px;top:531px;height:18px"></div>
<div class="ig" style="left:1087px;top:531px;height:18px"></div>
<div class="ig" style="left:1103px;top:531px;height:18px"></div>
<div class="ig" style="left:1119px;top:531px;height:18px"></div>
<div class="ln" style="top:549px;left:1005px;width:40px">25</div>
<div class="cl" style="top:549px;left:1135px"><span class="t">{</span></div>
<div class="ig" style="left:1071px;top:549px;height:18px"></div>
<div class="ig" style="left:1087px;top:549px;height:18px"></div>
<div class="ig" style="left:1103px;top:549px;height:18px"></div>
<div class="ig" style="left:1119px;top:549px;height:18px"></div>
<div class="ln" style="top:567px;left:1005px;width:40px">26</div>
<div class="cl" style="top:567px;left:1151px"><span class="y">"id"</span><span class="t">:</span> <span class="s">"ca5b8e5e-5711-11f0-9112-283926bb6286"</span><span class="t">,</span></div>
<div class="ig" style="left:1071px;top:567px;height:18px"></div>
<div class="ig" style="left:1087px;top:567px;height:18px"></div>
<div class="ig" style="left:1103px;top:567px;height:18px"></div>
<div class="ig" style="left:1119px;top:567px;height:18px"></div>
<div class="ig" style="left:1135px;top:567px;height:18px"></div>
<div class="ln" style="top:585px;left:1005px;width:40px">27</div>
<svg class="mz" style="left:1247px;top:585px" width="135" height="15" viewBox="0 0 135 15"><rect x="0" y="0" width="5" height="5" fill="#52434f"/><rect x="5" y="0" width="5" height="5" fill="#5a4650"/><rect x="10" y="0" width="5" height="5" fill="#5a4650"/><rect x="15" y="0" width="5" height="5" fill="#52434f"/><rect x="20" y="0" width="5" height="5" fill="#453b4e"/><rect x="25" y="0" width="5" height="5" fill="#4a3f50"/><rect x="30" y="0" width="5" height="5" fill="#5a4650"/><rect x="35" y="0" width="5" height="5" fill="#5a4650"/><rect x="40" y="0" width="5" height="5" fill="#4a3f50"/><rect x="45" y="0" width="5" height="5" fill="#4a3f50"/><rect x="50" y="0" width="5" height="5" fill="#4a3f50"/><rect x="55" y="0" width="5" height="5" fill="#4a3f50"/><rect x="60" y="0" width="5" height="5" fill="#3e374c"/><rect x="65" y="0" width="5" height="5" fill="#4a3f50"/><rect x="70" y="0" width="5" height="5" fill="#5a4650"/><rect x="75" y="0" width="5" height="5" fill="#3e374c"/><rect x="80" y="0" width="5" height="5" fill="#3e374c"/><rect x="85" y="0" width="5" height="5" fill="#3e374c"/><rect x="90" y="0" width="5" height="5" fill="#3e374c"/><rect x="95" y="0" width="5" height="5" fill="#4a3f50"/><rect x="100" y="0" width="5" height="5" fill="#3e374c"/><rect x="105" y="0" width="5" height="5" fill="#4a3f50"/><rect x="110" y="0" width="5" height="5" fill="#3e374c"/><rect x="115" y="0" width="5" height="5" fill="#4a3f50"/><rect x="120" y="0" width="5" height="5" fill="#453b4e"/><rect x="125" y="0" width="5" height="5" fill="#4a3f50"/><rect x="130" y="0" width="5" height="5" fill="#453b4e"/><rect x="0" y="5" width="5" height="5" fill="#8a5a4a"/><rect x="5" y="5" width="5" height="5" fill="#7d5549"/><rect x="10" y="5" width="5" height="5" fill="#9a6046"/><rect x="15" y="5" width="5" height="5" fill="#a86640"/><rect x="20" y="5" width="5" height="5" fill="#8a5a4a"/><rect x="25" y="5" width="5" height="5" fill="#9a6046"/><rect x="30" y="5" width="5" height="5" fill="#8a5a4a"/><rect x="35" y="5" width="5" height="5" fill="#7d5549"/><rect x="40" y="5" width="5" height="5" fill="#9a6046"/><rect x="45" y="5" width="5" height="5" fill="#a86640"/><rect x="50" y="5" width="5" height="5" fill="#8a5a4a"/><rect x="55" y="5" width="5" height="5" fill="#9a6046"/><rect x="60" y="5" width="5" height="5" fill="#b06a42"/><rect x="65" y="5" width="5" height="5" fill="#5f464c"/><rect x="70" y="5" width="5" height="5" fill="#7d5549"/><rect x="75" y="5" width="5" height="5" fill="#6b4b4c"/><rect x="80" y="5" width="5" height="5" fill="#a86640"/><rect x="85" y="5" width="5" height="5" fill="#a86640"/><rect x="90" y="5" width="5" height="5" fill="#8a5a4a"/><rect x="95" y="5" width="5" height="5" fill="#9a6046"/><rect x="100" y="5" width="5" height="5" fill="#9a6046"/><rect x="105" y="5" width="5" height="5" fill="#8a5a4a"/><rect x="110" y="5" width="5" height="5" fill="#8a5a4a"/><rect x="115" y="5" width="5" height="5" fill="#8a5a4a"/><rect x="120" y="5" width="5" height="5" fill="#8a5a4a"/><rect x="125" y="5" width="5" height="5" fill="#6b4b4c"/><rect x="130" y="5" width="5" height="5" fill="#9a6046"/><rect x="0" y="10" width="5" height="5" fill="#5f464c"/><rect x="5" y="10" width="5" height="5" fill="#6b4b4c"/><rect x="10" y="10" width="5" height="5" fill="#8a5a48"/><rect x="15" y="10" width="5" height="5" fill="#74504a"/><rect x="20" y="10" width="5" height="5" fill="#8a5a48"/><rect x="25" y="10" width="5" height="5" fill="#74504a"/><rect x="30" y="10" width="5" height="5" fill="#7d5549"/><rect x="35" y="10" width="5" height="5" fill="#6b4b4c"/><rect x="40" y="10" width="5" height="5" fill="#8a5a48"/><rect x="45" y="10" width="5" height="5" fill="#5f464c"/><rect x="50" y="10" width="5" height="5" fill="#56434e"/><rect x="55" y="10" width="5" height="5" fill="#6b4b4c"/><rect x="60" y="10" width="5" height="5" fill="#5f464c"/><rect x="65" y="10" width="5" height="5" fill="#56434e"/><rect x="70" y="10" width="5" height="5" fill="#74504a"/><rect x="75" y="10" width="5" height="5" fill="#5f464c"/><rect x="80" y="10" width="5" height="5" fill="#8a5a48"/><rect x="85" y="10" width="5" height="5" fill="#56434e"/><rect x="90" y="10" width="5" height="5" fill="#6b4b4c"/><rect x="95" y="10" width="5" height="5" fill="#6b4b4c"/><rect x="100" y="10" width="5" height="5" fill="#56434e"/><rect x="105" y="10" width="5" height="5" fill="#74504a"/><rect x="110" y="10" width="5" height="5" fill="#8a5a48"/><rect x="115" y="10" width="5" height="5" fill="#6b4b4c"/><rect x="120" y="10" width="5" height="5" fill="#6b4b4c"/><rect x="125" y="10" width="5" height="5" fill="#8a5a48"/><rect x="130" y="10" width="5" height="5" fill="#6b4b4c"/></svg>
<div class="cl" style="top:585px;left:1383px"><span class="t">,</span></div>
<div class="cl" style="top:585px;left:1151px"><span class="y">"nodeName"</span><span class="t">:</span> </div>
<div class="ig" style="left:1071px;top:585px;height:18px"></div>
<div class="ig" style="left:1087px;top:585px;height:18px"></div>
<div class="ig" style="left:1103px;top:585px;height:18px"></div>
<div class="ig" style="left:1119px;top:585px;height:18px"></div>
<div class="ig" style="left:1135px;top:585px;height:18px"></div>
<div class="ln" style="top:603px;left:1005px;width:40px">28</div>
<div class="cl" style="top:603px;left:1151px"><span class="y">"csManufacturer"</span><span class="t">:</span> <span class="s">"LENOVO"</span><span class="t">,</span></div>
<div class="ig" style="left:1071px;top:603px;height:18px"></div>
<div class="ig" style="left:1087px;top:603px;height:18px"></div>
<div class="ig" style="left:1103px;top:603px;height:18px"></div>
<div class="ig" style="left:1119px;top:603px;height:18px"></div>
<div class="ig" style="left:1135px;top:603px;height:18px"></div>
<div class="ln" style="top:621px;left:1005px;width:40px">29</div>
<div class="cl" style="top:621px;left:1151px"><span class="y">"csModel"</span><span class="t">:</span> <span class="s">"81RG"</span><span class="t">,</span></div>
<div class="ig" style="left:1071px;top:621px;height:18px"></div>
<div class="ig" style="left:1087px;top:621px;height:18px"></div>
<div class="ig" style="left:1103px;top:621px;height:18px"></div>
<div class="ig" style="left:1119px;top:621px;height:18px"></div>
<div class="ig" style="left:1135px;top:621px;height:18px"></div>
<div class="ln" style="top:639px;left:1005px;width:40px">30</div>
<div class="cl" style="top:639px;left:1151px"><span class="y">"osName"</span><span class="t">:</span> <span class="s">"Microsoft Windows 10 Pro"</span><span class="t">,</span></div>
<div class="ig" style="left:1071px;top:639px;height:18px"></div>
<div class="ig" style="left:1087px;top:639px;height:18px"></div>
<div class="ig" style="left:1103px;top:639px;height:18px"></div>
<div class="ig" style="left:1119px;top:639px;height:18px"></div>
<div class="ig" style="left:1135px;top:639px;height:18px"></div>
<div class="ln" style="top:657px;left:1005px;width:40px">31</div>
<div class="cl" style="top:657px;left:1151px"><span class="y">"osVersion"</span><span class="t">:</span> <span class="s">"10.0.19045"</span></div>
<div class="ig" style="left:1071px;top:657px;height:18px"></div>
<div class="ig" style="left:1087px;top:657px;height:18px"></div>
<div class="ig" style="left:1103px;top:657px;height:18px"></div>
<div class="ig" style="left:1119px;top:657px;height:18px"></div>
<div class="ig" style="left:1135px;top:657px;height:18px"></div>
<div class="ln" style="top:675px;left:1005px;width:40px">32</div>
<div class="cl" style="top:675px;left:1135px"><span class="t">},</span></div>
<div class="ig" style="left:1071px;top:675px;height:18px"></div>
<div class="ig" style="left:1087px;top:675px;height:18px"></div>
<div class="ig" style="left:1103px;top:675px;height:18px"></div>
<div class="ig" style="left:1119px;top:675px;height:18px"></div>
<div class="ln" style="top:693px;left:1005px;width:40px">33</div>
<div class="cl" style="top:693px;left:1135px"><span class="t">{</span></div>
<div class="ig" style="left:1071px;top:693px;height:18px"></div>
<div class="ig" style="left:1087px;top:693px;height:18px"></div>
<div class="ig" style="left:1103px;top:693px;height:18px"></div>
<div class="ig" style="left:1119px;top:693px;height:18px"></div>
<div class="ln" style="top:711px;left:1005px;width:40px">34</div>
<div class="cl" style="top:711px;left:1151px"><span class="y">"id"</span><span class="t">:</span> <span class="s">"b51a890b-5581-11f0-af3f-f8fe5ef5abda"</span><span class="t">,</span></div>
<div class="ig" style="left:1071px;top:711px;height:18px"></div>
<div class="ig" style="left:1087px;top:711px;height:18px"></div>
<div class="ig" style="left:1103px;top:711px;height:18px"></div>
<div class="ig" style="left:1119px;top:711px;height:18px"></div>
<div class="ig" style="left:1135px;top:711px;height:18px"></div>
<div class="ln" style="top:729px;left:1005px;width:40px">35</div>
<svg class="mz" style="left:1247px;top:731px" width="135" height="10" viewBox="0 0 135 10"><rect x="0" y="0" width="5" height="5" fill="#74504a"/><rect x="5" y="0" width="5" height="5" fill="#56434e"/><rect x="10" y="0" width="5" height="5" fill="#74504a"/><rect x="15" y="0" width="5" height="5" fill="#5f464c"/><rect x="20" y="0" width="5" height="5" fill="#74504a"/><rect x="25" y="0" width="5" height="5" fill="#6b4b4c"/><rect x="30" y="0" width="5" height="5" fill="#5f464c"/><rect x="35" y="0" width="5" height="5" fill="#56434e"/><rect x="40" y="0" width="5" height="5" fill="#56434e"/><rect x="45" y="0" width="5" height="5" fill="#6b4b4c"/><rect x="50" y="0" width="5" height="5" fill="#56434e"/><rect x="55" y="0" width="5" height="5" fill="#74504a"/><rect x="60" y="0" width="5" height="5" fill="#8a5a48"/><rect x="65" y="0" width="5" height="5" fill="#5f464c"/><rect x="70" y="0" width="5" height="5" fill="#56434e"/><rect x="75" y="0" width="5" height="5" fill="#6b4b4c"/><rect x="80" y="0" width="5" height="5" fill="#6b4b4c"/><rect x="85" y="0" width="5" height="5" fill="#6b4b4c"/><rect x="90" y="0" width="5" height="5" fill="#6b4b4c"/><rect x="95" y="0" width="5" height="5" fill="#5f464c"/><rect x="100" y="0" width="5" height="5" fill="#6b4b4c"/><rect x="105" y="0" width="5" height="5" fill="#5f464c"/><rect x="110" y="0" width="5" height="5" fill="#6b4b4c"/><rect x="115" y="0" width="5" height="5" fill="#7d5549"/><rect x="120" y="0" width="5" height="5" fill="#8a5a48"/><rect x="125" y="0" width="5" height="5" fill="#6b4b4c"/><rect x="130" y="0" width="5" height="5" fill="#5f464c"/><rect x="0" y="5" width="5" height="5" fill="#b06a42"/><rect x="5" y="5" width="5" height="5" fill="#8a5a4a"/><rect x="10" y="5" width="5" height="5" fill="#a86640"/><rect x="15" y="5" width="5" height="5" fill="#8a5a4a"/><rect x="20" y="5" width="5" height="5" fill="#8a5a4a"/><rect x="25" y="5" width="5" height="5" fill="#6b4b4c"/><rect x="30" y="5" width="5" height="5" fill="#8a5a4a"/><rect x="35" y="5" width="5" height="5" fill="#6b4b4c"/><rect x="40" y="5" width="5" height="5" fill="#b06a42"/><rect x="45" y="5" width="5" height="5" fill="#a86640"/><rect x="50" y="5" width="5" height="5" fill="#8a5a4a"/><rect x="55" y="5" width="5" height="5" fill="#a86640"/><rect x="60" y="5" width="5" height="5" fill="#a86640"/><rect x="65" y="5" width="5" height="5" fill="#9a6046"/><rect x="70" y="5" width="5" height="5" fill="#b06a42"/><rect x="75" y="5" width="5" height="5" fill="#9a6046"/><rect x="80" y="5" width="5" height="5" fill="#b06a42"/><rect x="85" y="5" width="5" height="5" fill="#8a5a4a"/><rect x="90" y="5" width="5" height="5" fill="#b06a42"/><rect x="95" y="5" width="5" height="5" fill="#a86640"/><rect x="100" y="5" width="5" height="5" fill="#b06a42"/><rect x="105" y="5" width="5" height="5" fill="#8a5a4a"/><rect x="110" y="5" width="5" height="5" fill="#8a5a4a"/><rect x="115" y="5" width="5" height="5" fill="#8a5a4a"/><rect x="120" y="5" width="5" height="5" fill="#a86640"/><rect x="125" y="5" width="5" height="5" fill="#9a6046"/><rect x="130" y="5" width="5" height="5" fill="#9a6046"/></svg>
<div class="cl" style="top:729px;left:1383px"><span class="t">,</span></div>
<div class="cl" style="top:729px;left:1151px"><span class="y">"nodeName"</span><span class="t">:</span> </div>
<div class="ig" style="left:1071px;top:729px;height:18px"></div>
<div class="ig" style="left:1087px;top:729px;height:18px"></div>
<div class="ig" style="left:1103px;top:729px;height:18px"></div>
<div class="ig" style="left:1119px;top:729px;height:18px"></div>
<div class="ig" style="left:1135px;top:729px;height:18px"></div>
<div class="ln" style="top:747px;left:1005px;width:40px">36</div>
<div class="cl" style="top:747px;left:1151px"><span class="y">"csManufacturer"</span><span class="t">:</span> <span class="s">"LENOVO"</span><span class="t">,</span></div>
<div class="ig" style="left:1071px;top:747px;height:18px"></div>
<div class="ig" style="left:1087px;top:747px;height:18px"></div>
<div class="ig" style="left:1103px;top:747px;height:18px"></div>
<div class="ig" style="left:1119px;top:747px;height:18px"></div>
<div class="ig" style="left:1135px;top:747px;height:18px"></div>
<div class="ln" style="top:765px;left:1005px;width:40px">37</div>
<div class="cl" style="top:765px;left:1151px"><span class="y">"csModel"</span><span class="t">:</span> <span class="s">"83A1"</span><span class="t">,</span></div>
<div class="ig" style="left:1071px;top:765px;height:18px"></div>
<div class="ig" style="left:1087px;top:765px;height:18px"></div>
<div class="ig" style="left:1103px;top:765px;height:18px"></div>
<div class="ig" style="left:1119px;top:765px;height:18px"></div>
<div class="ig" style="left:1135px;top:765px;height:18px"></div>
<div class="ln" style="top:783px;left:1005px;width:40px">38</div>
<div class="cl" style="top:783px;left:1151px"><span class="y">"osName"</span><span class="t">:</span> <span class="s">"Microsoft Windows 11 Pro"</span><span class="t">,</span></div>
<div class="ig" style="left:1071px;top:783px;height:18px"></div>
<div class="ig" style="left:1087px;top:783px;height:18px"></div>
<div class="ig" style="left:1103px;top:783px;height:18px"></div>
<div class="ig" style="left:1119px;top:783px;height:18px"></div>
<div class="ig" style="left:1135px;top:783px;height:18px"></div>
<div class="ln" style="top:801px;left:1005px;width:40px">39</div>
<div class="cl" style="top:801px;left:1151px"><span class="y">"osVersion"</span><span class="t">:</span> <span class="s">"10.0.22631"</span></div>
<div class="ig" style="left:1071px;top:801px;height:18px"></div>
<div class="ig" style="left:1087px;top:801px;height:18px"></div>
<div class="ig" style="left:1103px;top:801px;height:18px"></div>
<div class="ig" style="left:1119px;top:801px;height:18px"></div>
<div class="ig" style="left:1135px;top:801px;height:18px"></div>
<div class="ln" style="top:819px;left:1005px;width:40px">40</div>
<div class="cl" style="top:819px;left:1135px"><span class="t">},</span></div>
<div class="ig" style="left:1071px;top:819px;height:18px"></div>
<div class="ig" style="left:1087px;top:819px;height:18px"></div>
<div class="ig" style="left:1103px;top:819px;height:18px"></div>
<div class="ig" style="left:1119px;top:819px;height:18px"></div>
<div class="ln" style="top:837px;left:1005px;width:40px">41</div>
<div class="cl" style="top:837px;left:1135px"><span class="t">{</span></div>
<div class="ig" style="left:1071px;top:837px;height:18px"></div>
<div class="ig" style="left:1087px;top:837px;height:18px"></div>
<div class="ig" style="left:1103px;top:837px;height:18px"></div>
<div class="ig" style="left:1119px;top:837px;height:18px"></div>

<!-- bottom left panel -->
<div class="hl" style="left:88px;top:856px;width:1832px"></div>
<div class="hl" style="left:88px;top:893px;width:1832px"></div>
<div class="hl" style="left:201px;top:892px;width:91px;background:#e8ebf2"></div>
<div class="hl" style="left:88px;top:914px;width:916px"></div>
<div class="hl" style="left:88px;top:951px;width:916px"></div>
<div class="hl" style="left:88px;top:988px;width:916px"></div>

<div class="tog dim" style="left:96px;top:924px"><i></i></div>
<div class="inp" style="left:132px;top:919px;width:247px"></div>
<div class="inp" style="left:387px;top:919px;width:575px"></div>
<div class="tog" style="left:96px;top:961px"><i></i></div>
<div class="inp" style="left:132px;top:956px;width:247px"></div>
<div class="inp" style="left:387px;top:956px;width:575px"></div>
<div class="tog dim" style="left:96px;top:998px"><i></i></div>
<div class="inp ph" style="left:132px;top:993px;width:247px"></div>
<div class="inp ph" style="left:387px;top:993px;width:575px"></div>
<svg class="mz" style="left:395px;top:929px" width="560" height="10" viewBox="0 0 560 10"><rect x="0" y="0" width="5" height="5" fill="#535f7e"/><rect x="5" y="0" width="5" height="5" fill="#64708d"/><rect x="10" y="0" width="5" height="5" fill="#6e7994"/><rect x="15" y="0" width="5" height="5" fill="#5f6b88"/><rect x="20" y="0" width="5" height="5" fill="#566281"/><rect x="25" y="0" width="5" height="5" fill="#535f7e"/><rect x="30" y="0" width="5" height="5" fill="#5b6785"/><rect x="35" y="0" width="5" height="5" fill="#616d8a"/><rect x="40" y="0" width="5" height="5" fill="#64708d"/><rect x="45" y="0" width="5" height="5" fill="#64708d"/><rect x="50" y="0" width="5" height="5" fill="#535f7e"/><rect x="55" y="0" width="5" height="5" fill="#5f6b88"/><rect x="60" y="0" width="5" height="5" fill="#535f7e"/><rect x="65" y="0" width="5" height="5" fill="#64708d"/><rect x="70" y="0" width="5" height="5" fill="#64708d"/><rect x="75" y="0" width="5" height="5" fill="#64708d"/><rect x="80" y="0" width="5" height="5" fill="#566281"/><rect x="85" y="0" width="5" height="5" fill="#566281"/><rect x="90" y="0" width="5" height="5" fill="#566281"/><rect x="95" y="0" width="5" height="5" fill="#5b6785"/><rect x="100" y="0" width="5" height="5" fill="#566281"/><rect x="105" y="0" width="5" height="5" fill="#8891aa"/><rect x="110" y="0" width="5" height="5" fill="#5f6b88"/><rect x="115" y="0" width="5" height="5" fill="#5b6785"/><rect x="120" y="0" width="5" height="5" fill="#566281"/><rect x="125" y="0" width="5" height="5" fill="#8891aa"/><rect x="130" y="0" width="5" height="5" fill="#8891aa"/><rect x="135" y="0" width="5" height="5" fill="#5f6b88"/><rect x="140" y="0" width="5" height="5" fill="#5b6785"/><rect x="145" y="0" width="5" height="5" fill="#616d8a"/><rect x="150" y="0" width="5" height="5" fill="#566281"/><rect x="155" y="0" width="5" height="5" fill="#66718e"/><rect x="160" y="0" width="5" height="5" fill="#66718e"/><rect x="165" y="0" width="5" height="5" fill="#566281"/><rect x="170" y="0" width="5" height="5" fill="#5b6785"/><rect x="175" y="0" width="5" height="5" fill="#5b6785"/><rect x="180" y="0" width="5" height="5" fill="#64708d"/><rect x="185" y="0" width="5" height="5" fill="#5b6785"/><rect x="190" y="0" width="5" height="5" fill="#64708d"/><rect x="195" y="0" width="5" height="5" fill="#66718e"/><rect x="200" y="0" width="5" height="5" fill="#64708d"/><rect x="205" y="0" width="5" height="5" fill="#566281"/><rect x="210" y="0" width="5" height="5" fill="#535f7e"/><rect x="215" y="0" width="5" height="5" fill="#6e7994"/><rect x="220" y="0" width="5" height="5" fill="#6e7994"/><rect x="225" y="0" width="5" height="5" fill="#5b6785"/><rect x="230" y="0" width="5" height="5" fill="#5b6785"/><rect x="235" y="0" width="5" height="5" fill="#6e7994"/><rect x="240" y="0" width="5" height="5" fill="#5b6785"/><rect x="245" y="0" width="5" height="5" fill="#66718e"/><rect x="250" y="0" width="5" height="5" fill="#6e7994"/><rect x="255" y="0" width="5" height="5" fill="#8891aa"/><rect x="260" y="0" width="5" height="5" fill="#616d8a"/><rect x="265" y="0" width="5" height="5" fill="#5b6785"/><rect x="270" y="0" width="5" height="5" fill="#66718e"/><rect x="275" y="0" width="5" height="5" fill="#535f7e"/><rect x="280" y="0" width="5" height="5" fill="#566281"/><rect x="285" y="0" width="5" height="5" fill="#5b6785"/><rect x="290" y="0" width="5" height="5" fill="#64708d"/><rect x="295" y="0" width="5" height="5" fill="#616d8a"/><rect x="300" y="0" width="5" height="5" fill="#5f6b88"/><rect x="305" y="0" width="5" height="5" fill="#5b6785"/><rect x="310" y="0" width="5" height="5" fill="#8891aa"/><rect x="315" y="0" width="5" height="5" fill="#66718e"/><rect x="320" y="0" width="5" height="5" fill="#535f7e"/><rect x="325" y="0" width="5" height="5" fill="#66718e"/><rect x="330" y="0" width="5" height="5" fill="#566281"/><rect x="335" y="0" width="5" height="5" fill="#66718e"/><rect x="340" y="0" width="5" height="5" fill="#566281"/><rect x="345" y="0" width="5" height="5" fill="#66718e"/><rect x="350" y="0" width="5" height="5" fill="#66718e"/><rect x="355" y="0" width="5" height="5" fill="#5b6785"/><rect x="360" y="0" width="5" height="5" fill="#5f6b88"/><rect x="365" y="0" width="5" height="5" fill="#566281"/><rect x="370" y="0" width="5" height="5" fill="#8891aa"/><rect x="375" y="0" width="5" height="5" fill="#5b6785"/><rect x="380" y="0" width="5" height="5" fill="#566281"/><rect x="385" y="0" width="5" height="5" fill="#566281"/><rect x="390" y="0" width="5" height="5" fill="#566281"/><rect x="395" y="0" width="5" height="5" fill="#5f6b88"/><rect x="400" y="0" width="5" height="5" fill="#8891aa"/><rect x="405" y="0" width="5" height="5" fill="#64708d"/><rect x="410" y="0" width="5" height="5" fill="#64708d"/><rect x="415" y="0" width="5" height="5" fill="#66718e"/><rect x="420" y="0" width="5" height="5" fill="#5b6785"/><rect x="425" y="0" width="5" height="5" fill="#616d8a"/><rect x="430" y="0" width="5" height="5" fill="#5b6785"/><rect x="435" y="0" width="5" height="5" fill="#66718e"/><rect x="440" y="0" width="5" height="5" fill="#66718e"/><rect x="445" y="0" width="5" height="5" fill="#66718e"/><rect x="450" y="0" width="5" height="5" fill="#5f6b88"/><rect x="455" y="0" width="5" height="5" fill="#64708d"/><rect x="460" y="0" width="5" height="5" fill="#66718e"/><rect x="465" y="0" width="5" height="5" fill="#5b6785"/><rect x="470" y="0" width="5" height="5" fill="#6e7994"/><rect x="475" y="0" width="5" height="5" fill="#6e7994"/><rect x="480" y="0" width="5" height="5" fill="#5b6785"/><rect x="485" y="0" width="5" height="5" fill="#5b6785"/><rect x="490" y="0" width="5" height="5" fill="#64708d"/><rect x="495" y="0" width="5" height="5" fill="#66718e"/><rect x="500" y="0" width="5" height="5" fill="#5f6b88"/><rect x="505" y="0" width="5" height="5" fill="#66718e"/><rect x="510" y="0" width="5" height="5" fill="#5b6785"/><rect x="515" y="0" width="5" height="5" fill="#64708d"/><rect x="520" y="0" width="5" height="5" fill="#5f6b88"/><rect x="525" y="0" width="5" height="5" fill="#616d8a"/><rect x="530" y="0" width="5" height="5" fill="#8891aa"/><rect x="535" y="0" width="5" height="5" fill="#66718e"/><rect x="540" y="0" width="5" height="5" fill="#8891aa"/><rect x="545" y="0" width="5" height="5" fill="#66718e"/><rect x="550" y="0" width="5" height="5" fill="#6e7994"/><rect x="555" y="0" width="5" height="5" fill="#64708d"/><rect x="0" y="5" width="5" height="5" fill="#5b6785"/><rect x="5" y="5" width="5" height="5" fill="#616d8a"/><rect x="10" y="5" width="5" height="5" fill="#616d8a"/><rect x="15" y="5" width="5" height="5" fill="#66718e"/><rect x="20" y="5" width="5" height="5" fill="#5b6785"/><rect x="25" y="5" width="5" height="5" fill="#66718e"/><rect x="30" y="5" width="5" height="5" fill="#616d8a"/><rect x="35" y="5" width="5" height="5" fill="#717c97"/><rect x="40" y="5" width="5" height="5" fill="#7a849e"/><rect x="45" y="5" width="5" height="5" fill="#5f6b88"/><rect x="50" y="5" width="5" height="5" fill="#7a849e"/><rect x="55" y="5" width="5" height="5" fill="#616d8a"/><rect x="60" y="5" width="5" height="5" fill="#6c7793"/><rect x="65" y="5" width="5" height="5" fill="#5f6b88"/><rect x="70" y="5" width="5" height="5" fill="#66718e"/><rect x="75" y="5" width="5" height="5" fill="#7a849e"/><rect x="80" y="5" width="5" height="5" fill="#5f6b88"/><rect x="85" y="5" width="5" height="5" fill="#66718e"/><rect x="90" y="5" width="5" height="5" fill="#5b6785"/><rect x="95" y="5" width="5" height="5" fill="#5f6b88"/><rect x="100" y="5" width="5" height="5" fill="#717c97"/><rect x="105" y="5" width="5" height="5" fill="#6c7793"/><rect x="110" y="5" width="5" height="5" fill="#717c97"/><rect x="115" y="5" width="5" height="5" fill="#5b6785"/><rect x="120" y="5" width="5" height="5" fill="#717c97"/><rect x="125" y="5" width="5" height="5" fill="#616d8a"/><rect x="130" y="5" width="5" height="5" fill="#66718e"/><rect x="135" y="5" width="5" height="5" fill="#5f6b88"/><rect x="140" y="5" width="5" height="5" fill="#7a849e"/><rect x="145" y="5" width="5" height="5" fill="#616d8a"/><rect x="150" y="5" width="5" height="5" fill="#717c97"/><rect x="155" y="5" width="5" height="5" fill="#66718e"/><rect x="160" y="5" width="5" height="5" fill="#717c97"/><rect x="165" y="5" width="5" height="5" fill="#7a849e"/><rect x="170" y="5" width="5" height="5" fill="#7a849e"/><rect x="175" y="5" width="5" height="5" fill="#6c7793"/><rect x="180" y="5" width="5" height="5" fill="#7a849e"/><rect x="185" y="5" width="5" height="5" fill="#66718e"/><rect x="190" y="5" width="5" height="5" fill="#6c7793"/><rect x="195" y="5" width="5" height="5" fill="#6c7793"/><rect x="200" y="5" width="5" height="5" fill="#5f6b88"/><rect x="205" y="5" width="5" height="5" fill="#6c7793"/><rect x="210" y="5" width="5" height="5" fill="#66718e"/><rect x="215" y="5" width="5" height="5" fill="#6c7793"/><rect x="220" y="5" width="5" height="5" fill="#616d8a"/><rect x="225" y="5" width="5" height="5" fill="#616d8a"/><rect x="230" y="5" width="5" height="5" fill="#66718e"/><rect x="235" y="5" width="5" height="5" fill="#7a849e"/><rect x="240" y="5" width="5" height="5" fill="#6c7793"/><rect x="245" y="5" width="5" height="5" fill="#5b6785"/><rect x="250" y="5" width="5" height="5" fill="#5f6b88"/><rect x="255" y="5" width="5" height="5" fill="#5f6b88"/><rect x="260" y="5" width="5" height="5" fill="#66718e"/><rect x="265" y="5" width="5" height="5" fill="#5f6b88"/><rect x="270" y="5" width="5" height="5" fill="#5f6b88"/><rect x="275" y="5" width="5" height="5" fill="#5b6785"/><rect x="280" y="5" width="5" height="5" fill="#5b6785"/><rect x="285" y="5" width="5" height="5" fill="#66718e"/><rect x="290" y="5" width="5" height="5" fill="#717c97"/><rect x="295" y="5" width="5" height="5" fill="#5b6785"/><rect x="300" y="5" width="5" height="5" fill="#717c97"/><rect x="305" y="5" width="5" height="5" fill="#7a849e"/><rect x="310" y="5" width="5" height="5" fill="#5b6785"/><rect x="315" y="5" width="5" height="5" fill="#7a849e"/><rect x="320" y="5" width="5" height="5" fill="#717c97"/><rect x="325" y="5" width="5" height="5" fill="#616d8a"/><rect x="330" y="5" width="5" height="5" fill="#6c7793"/><rect x="335" y="5" width="5" height="5" fill="#5f6b88"/><rect x="340" y="5" width="5" height="5" fill="#5b6785"/><rect x="345" y="5" width="5" height="5" fill="#66718e"/><rect x="350" y="5" width="5" height="5" fill="#717c97"/><rect x="355" y="5" width="5" height="5" fill="#7a849e"/><rect x="360" y="5" width="5" height="5" fill="#5f6b88"/><rect x="365" y="5" width="5" height="5" fill="#5b6785"/><rect x="370" y="5" width="5" height="5" fill="#66718e"/><rect x="375" y="5" width="5" height="5" fill="#5f6b88"/><rect x="380" y="5" width="5" height="5" fill="#5b6785"/><rect x="385" y="5" width="5" height="5" fill="#5f6b88"/><rect x="390" y="5" width="5" height="5" fill="#66718e"/><rect x="395" y="5" width="5" height="5" fill="#5f6b88"/><rect x="400" y="5" width="5" height="5" fill="#5b6785"/><rect x="405" y="5" width="5" height="5" fill="#5f6b88"/><rect x="410" y="5" width="5" height="5" fill="#616d8a"/><rect x="415" y="5" width="5" height="5" fill="#66718e"/><rect x="420" y="5" width="5" height="5" fill="#6c7793"/><rect x="425" y="5" width="5" height="5" fill="#7a849e"/><rect x="430" y="5" width="5" height="5" fill="#5b6785"/><rect x="435" y="5" width="5" height="5" fill="#717c97"/><rect x="440" y="5" width="5" height="5" fill="#66718e"/><rect x="445" y="5" width="5" height="5" fill="#66718e"/><rect x="450" y="5" width="5" height="5" fill="#5f6b88"/><rect x="455" y="5" width="5" height="5" fill="#717c97"/><rect x="460" y="5" width="5" height="5" fill="#5b6785"/><rect x="465" y="5" width="5" height="5" fill="#66718e"/><rect x="470" y="5" width="5" height="5" fill="#717c97"/><rect x="475" y="5" width="5" height="5" fill="#66718e"/><rect x="480" y="5" width="5" height="5" fill="#5b6785"/><rect x="485" y="5" width="5" height="5" fill="#5b6785"/><rect x="490" y="5" width="5" height="5" fill="#66718e"/><rect x="495" y="5" width="5" height="5" fill="#5b6785"/><rect x="500" y="5" width="5" height="5" fill="#616d8a"/><rect x="505" y="5" width="5" height="5" fill="#717c97"/><rect x="510" y="5" width="5" height="5" fill="#5b6785"/><rect x="515" y="5" width="5" height="5" fill="#6c7793"/><rect x="520" y="5" width="5" height="5" fill="#66718e"/><rect x="525" y="5" width="5" height="5" fill="#5b6785"/><rect x="530" y="5" width="5" height="5" fill="#66718e"/><rect x="535" y="5" width="5" height="5" fill="#66718e"/><rect x="540" y="5" width="5" height="5" fill="#66718e"/><rect x="545" y="5" width="5" height="5" fill="#66718e"/><rect x="550" y="5" width="5" height="5" fill="#616d8a"/><rect x="555" y="5" width="5" height="5" fill="#66718e"/></svg>
<svg class="mz" style="left:395px;top:966px" width="225" height="10" viewBox="0 0 225 10"><rect x="0" y="0" width="5" height="5" fill="#5f6b88"/><rect x="5" y="0" width="5" height="5" fill="#64708d"/><rect x="10" y="0" width="5" height="5" fill="#5b6785"/><rect x="15" y="0" width="5" height="5" fill="#5b6785"/><rect x="20" y="0" width="5" height="5" fill="#535f7e"/><rect x="25" y="0" width="5" height="5" fill="#5b6785"/><rect x="30" y="0" width="5" height="5" fill="#5f6b88"/><rect x="35" y="0" width="5" height="5" fill="#66718e"/><rect x="40" y="0" width="5" height="5" fill="#535f7e"/><rect x="45" y="0" width="5" height="5" fill="#66718e"/><rect x="50" y="0" width="5" height="5" fill="#5b6785"/><rect x="55" y="0" width="5" height="5" fill="#64708d"/><rect x="60" y="0" width="5" height="5" fill="#6e7994"/><rect x="65" y="0" width="5" height="5" fill="#6e7994"/><rect x="70" y="0" width="5" height="5" fill="#616d8a"/><rect x="75" y="0" width="5" height="5" fill="#6e7994"/><rect x="80" y="0" width="5" height="5" fill="#64708d"/><rect x="85" y="0" width="5" height="5" fill="#64708d"/><rect x="90" y="0" width="5" height="5" fill="#5b6785"/><rect x="95" y="0" width="5" height="5" fill="#566281"/><rect x="100" y="0" width="5" height="5" fill="#535f7e"/><rect x="105" y="0" width="5" height="5" fill="#616d8a"/><rect x="110" y="0" width="5" height="5" fill="#5b6785"/><rect x="115" y="0" width="5" height="5" fill="#566281"/><rect x="120" y="0" width="5" height="5" fill="#5b6785"/><rect x="125" y="0" width="5" height="5" fill="#64708d"/><rect x="130" y="0" width="5" height="5" fill="#5b6785"/><rect x="135" y="0" width="5" height="5" fill="#64708d"/><rect x="140" y="0" width="5" height="5" fill="#5b6785"/><rect x="145" y="0" width="5" height="5" fill="#535f7e"/><rect x="150" y="0" width="5" height="5" fill="#566281"/><rect x="155" y="0" width="5" height="5" fill="#5b6785"/><rect x="160" y="0" width="5" height="5" fill="#64708d"/><rect x="165" y="0" width="5" height="5" fill="#5b6785"/><rect x="170" y="0" width="5" height="5" fill="#535f7e"/><rect x="175" y="0" width="5" height="5" fill="#66718e"/><rect x="180" y="0" width="5" height="5" fill="#5b6785"/><rect x="185" y="0" width="5" height="5" fill="#5b6785"/><rect x="190" y="0" width="5" height="5" fill="#8891aa"/><rect x="195" y="0" width="5" height="5" fill="#6e7994"/><rect x="200" y="0" width="5" height="5" fill="#64708d"/><rect x="205" y="0" width="5" height="5" fill="#5b6785"/><rect x="210" y="0" width="5" height="5" fill="#5b6785"/><rect x="215" y="0" width="5" height="5" fill="#5f6b88"/><rect x="220" y="0" width="5" height="5" fill="#566281"/><rect x="0" y="5" width="5" height="5" fill="#717c97"/><rect x="5" y="5" width="5" height="5" fill="#5b6785"/><rect x="10" y="5" width="5" height="5" fill="#616d8a"/><rect x="15" y="5" width="5" height="5" fill="#66718e"/><rect x="20" y="5" width="5" height="5" fill="#5b6785"/><rect x="25" y="5" width="5" height="5" fill="#6c7793"/><rect x="30" y="5" width="5" height="5" fill="#6c7793"/><rect x="35" y="5" width="5" height="5" fill="#6c7793"/><rect x="40" y="5" width="5" height="5" fill="#66718e"/><rect x="45" y="5" width="5" height="5" fill="#66718e"/><rect x="50" y="5" width="5" height="5" fill="#5b6785"/><rect x="55" y="5" width="5" height="5" fill="#66718e"/><rect x="60" y="5" width="5" height="5" fill="#6c7793"/><rect x="65" y="5" width="5" height="5" fill="#717c97"/><rect x="70" y="5" width="5" height="5" fill="#66718e"/><rect x="75" y="5" width="5" height="5" fill="#6c7793"/><rect x="80" y="5" width="5" height="5" fill="#7a849e"/><rect x="85" y="5" width="5" height="5" fill="#5f6b88"/><rect x="90" y="5" width="5" height="5" fill="#616d8a"/><rect x="95" y="5" width="5" height="5" fill="#5b6785"/><rect x="100" y="5" width="5" height="5" fill="#66718e"/><rect x="105" y="5" width="5" height="5" fill="#66718e"/><rect x="110" y="5" width="5" height="5" fill="#66718e"/><rect x="115" y="5" width="5" height="5" fill="#5f6b88"/><rect x="120" y="5" width="5" height="5" fill="#5b6785"/><rect x="125" y="5" width="5" height="5" fill="#5f6b88"/><rect x="130" y="5" width="5" height="5" fill="#717c97"/><rect x="135" y="5" width="5" height="5" fill="#7a849e"/><rect x="140" y="5" width="5" height="5" fill="#66718e"/><rect x="145" y="5" width="5" height="5" fill="#7a849e"/><rect x="150" y="5" width="5" height="5" fill="#66718e"/><rect x="155" y="5" width="5" height="5" fill="#5b6785"/><rect x="160" y="5" width="5" height="5" fill="#5b6785"/><rect x="165" y="5" width="5" height="5" fill="#66718e"/><rect x="170" y="5" width="5" height="5" fill="#5f6b88"/><rect x="175" y="5" width="5" height="5" fill="#717c97"/><rect x="180" y="5" width="5" height="5" fill="#7a849e"/><rect x="185" y="5" width="5" height="5" fill="#6c7793"/><rect x="190" y="5" width="5" height="5" fill="#616d8a"/><rect x="195" y="5" width="5" height="5" fill="#717c97"/><rect x="200" y="5" width="5" height="5" fill="#5b6785"/><rect x="205" y="5" width="5" height="5" fill="#717c97"/><rect x="210" y="5" width="5" height="5" fill="#66718e"/><rect x="215" y="5" width="5" height="5" fill="#7a849e"/><rect x="220" y="5" width="5" height="5" fill="#717c97"/></svg><div class="abs" style="left:388px;top:981px;width:240px;height:5px;background:#36425f"></div>

<!-- responses panel -->
<div class="rrow" style="top:900px"><span class="dot"></span></div>
<svg class="ico" style="left:1034px;top:904px" width="46" height="18" viewBox="1034 904 46 18" fill="none" stroke-width="1.2">
<circle cx="1043" cy="913" r="6.5" stroke="#1fc98f"/><path d="M1040 913.3 L1042.1 915.4 L1046.3 910.9" stroke="#1fc98f"/>
<rect x="1061.6" y="906.6" width="12.8" height="12.8" rx="1" stroke="#35a8f0" stroke-width="1.1"/><circle cx="1068" cy="913.7" r="3.4" stroke="#35a8f0" stroke-width="1.1"/><path d="M1070 916.6 L1072.6 918.6" stroke="#35a8f0" stroke-width="1.3"/>
</svg>
<div class="txt" style="left:1084.6px;top:907.5px;font-size:12.5px;color:#c3c9da;transform:scaleX(0.9399);transform-origin:0 0">LenovoNodes</div>
<div class="txt" style="left:1762.3px;top:907.5px;font-size:12.5px;color:#c3c9da;transform:scaleX(0.9154);transform-origin:0 0">02:11:51.098 PM</div>
<div class="txt" style="left:1868px;top:907.5px;font-size:12.5px;color:#c3c9da;transform:scaleX(0.9295);transform-origin:0 0">282 ms</div>
<div class="rrow" style="top:926px"><span class="dot"></span></div>
<svg class="ico" style="left:1034px;top:930px" width="46" height="18" viewBox="1034 930 46 18" fill="none" stroke-width="1.2">
<circle cx="1043" cy="939" r="6.5" stroke="#1fc98f"/><path d="M1040 939.3 L1042.1 941.4 L1046.3 936.9" stroke="#1fc98f"/>
<rect x="1061.6" y="932.6" width="12.8" height="12.8" rx="1" stroke="#35a8f0" stroke-width="1.1"/><circle cx="1068" cy="939.7" r="3.4" stroke="#35a8f0" stroke-width="1.1"/><path d="M1070 942.6 L1072.6 944.6" stroke="#35a8f0" stroke-width="1.3"/>
</svg>
<div class="txt" style="left:1084.6px;top:933.5px;font-size:12.5px;color:#c3c9da;transform:scaleX(0.9288);transform-origin:0 0">LenovoFlatNodes</div>
<div class="txt" style="left:1762.3px;top:933.5px;font-size:12.5px;color:#c3c9da;transform:scaleX(0.9065);transform-origin:0 0">02:12:12.386 PM</div>
<div class="txt" style="left:1868px;top:933.5px;font-size:12.5px;color:#c3c9da;transform:scaleX(0.9295);transform-origin:0 0">280 ms</div>
<div class="rrow" style="top:952px"><span class="dot"></span></div>
<svg class="ico" style="left:1034px;top:956px" width="46" height="18" viewBox="1034 956 46 18" fill="none" stroke-width="1.2">
<circle cx="1043" cy="965" r="6.5" stroke="#1fc98f"/><path d="M1040 965.3 L1042.1 967.4 L1046.3 962.9" stroke="#1fc98f"/>
<rect x="1061.6" y="958.6" width="12.8" height="12.8" rx="1" stroke="#35a8f0" stroke-width="1.1"/><circle cx="1068" cy="965.7" r="3.4" stroke="#35a8f0" stroke-width="1.1"/><path d="M1070 968.6 L1072.6 970.6" stroke="#35a8f0" stroke-width="1.3"/>
</svg>
<div class="txt" style="left:1084.6px;top:959.5px;font-size:12.5px;color:#c3c9da;transform:scaleX(0.9288);transform-origin:0 0">LenovoFlatNodes</div>
<div class="txt" style="left:1762.3px;top:959.5px;font-size:12.5px;color:#c3c9da;transform:scaleX(0.9065);transform-origin:0 0">02:12:14.492 PM</div>
<div class="txt" style="left:1868px;top:959.5px;font-size:12.5px;color:#c3c9da;transform:scaleX(0.9295);transform-origin:0 0">324 ms</div>
<div class="rrow" style="top:978px"><span class="dot"></span></div>
<svg class="ico" style="left:1034px;top:982px" width="46" height="18" viewBox="1034 982 46 18" fill="none" stroke-width="1.2">
<circle cx="1043" cy="991" r="6.5" stroke="#1fc98f"/><path d="M1040 991.3 L1042.1 993.4 L1046.3 988.9" stroke="#1fc98f"/>
<rect x="1061.6" y="984.6" width="12.8" height="12.8" rx="1" stroke="#35a8f0" stroke-width="1.1"/><circle cx="1068" cy="991.7" r="3.4" stroke="#35a8f0" stroke-width="1.1"/><path d="M1070 994.6 L1072.6 996.6" stroke="#35a8f0" stroke-width="1.3"/>
</svg>
<div class="txt" style="left:1084.6px;top:985.5px;font-size:12.5px;color:#c3c9da;transform:scaleX(0.9288);transform-origin:0 0">LenovoFlatNodes</div>
<div class="txt" style="left:1762.3px;top:985.5px;font-size:12.5px;color:#c3c9da;transform:scaleX(0.9065);transform-origin:0 0">02:17:07.685 PM</div>
<div class="txt" style="left:1868px;top:985.5px;font-size:12.5px;color:#c3c9da;transform:scaleX(0.9295);transform-origin:0 0">503 ms</div>
<div class="rrow" style="top:1004px"><span class="dot"></span></div>
<svg class="ico" style="left:1034px;top:1008px" width="46" height="18" viewBox="1034 1008 46 18" fill="none" stroke-width="1.2">
<circle cx="1043" cy="1017" r="6.5" stroke="#1fc98f"/><path d="M1040 1017.3 L1042.1 1019.4 L1046.3 1014.9" stroke="#1fc98f"/>
<rect x="1061.6" y="1010.6" width="12.8" height="12.8" rx="1" stroke="#35a8f0" stroke-width="1.1"/><circle cx="1068" cy="1017.7" r="3.4" stroke="#35a8f0" stroke-width="1.1"/><path d="M1070 1020.6 L1072.6 1022.6" stroke="#35a8f0" stroke-width="1.3"/>
</svg>
<div class="txt" style="left:1084.6px;top:1011.5px;font-size:12.5px;color:#c3c9da;transform:scaleX(0.9288);transform-origin:0 0">LenovoFlatNodes</div>
<div class="txt" style="left:1762.3px;top:1011.5px;font-size:12.5px;color:#c3c9da;transform:scaleX(0.9065);transform-origin:0 0">02:17:49.515 PM</div>
<div class="txt" style="left:1868px;top:1011.5px;font-size:12.5px;color:#c3c9da;transform:scaleX(0.9295);transform-origin:0 0">660 ms</div>
<div class="rrow on" style="top:1030px"><span class="dot"></span></div>
<svg class="ico" style="left:1034px;top:1034px" width="46" height="18" viewBox="1034 1034 46 18" fill="none" stroke-width="1.2">
<circle cx="1043" cy="1043" r="6.5" stroke="#1fc98f"/><path d="M1040 1043.3 L1042.1 1045.4 L1046.3 1040.9" stroke="#1fc98f"/>
<rect x="1061.6" y="1036.6" width="12.8" height="12.8" rx="1" stroke="#35a8f0" stroke-width="1.1"/><circle cx="1068" cy="1043.7" r="3.4" stroke="#35a8f0" stroke-width="1.1"/><path d="M1070 1046.6 L1072.6 1048.6" stroke="#35a8f0" stroke-width="1.3"/>
</svg>
<div class="txt" style="left:1084.6px;top:1037.5px;font-size:12.5px;color:#ffffff;transform:scaleX(0.9288);transform-origin:0 0">LenovoFlatNodes</div>
<div class="txt" style="left:1762.3px;top:1037.5px;font-size:12.5px;color:#ffffff;-webkit-text-stroke:0.45px;transform:scaleX(0.9023);transform-origin:0 0">02:18:21.548 PM</div>
<div class="txt" style="left:1868px;top:1037.5px;font-size:12.5px;color:#ffffff;-webkit-text-stroke:0.45px;transform:scaleX(0.9198);transform-origin:0 0">920 ms</div>

<svg class="ico" style="left:66px;top:14px" width="20" height="22" viewBox="66 14 20 22" fill="none" stroke="#35b0f0" stroke-width="1.2" stroke-linejoin="round">
<path d="M71.6 18.6 H77 L80.6 22.2 V30.4 Q80.6 31.4 79.6 31.4 H71.6 Q70.6 31.4 70.6 30.4 V19.6 Q70.6 18.6 71.6 18.6 Z"/><path d="M77 18.8 V22.2 H80.4"/></svg>
<svg class="ico" style="left:265px;top:4px" width="100" height="38" viewBox="265 4 100 38" fill="none">
<path d="M274 23.5 H287 M280.5 17 V30" stroke="#e2e5ef" stroke-width="1.2"/>
<path d="M306.5 17.5 H317.6 L319.5 19.4 V30.5 H306.5 Z" stroke="#939db9" stroke-width="1.1"/>
<path d="M309.5 17.5 V21.5 H315.8 V17.5" stroke="#939db9" stroke-width="1.1"/>
<rect x="309.5" y="17.5" width="3.6" height="4" fill="#939db9"/>
<circle cx="340" cy="23.8" r="1.6" stroke="#939db9" stroke-width="0.9"/>
<circle cx="345" cy="23.8" r="1.6" stroke="#939db9" stroke-width="0.9"/>
<circle cx="350" cy="23.8" r="1.6" stroke="#939db9" stroke-width="0.9"/>
</svg>
<svg class="ico" style="left:1725px;top:44px" width="195" height="35" viewBox="1725 44 195 35" fill="none" stroke="#d5d9e6" stroke-width="1.1">
<circle cx="1739" cy="61" r="6.7"/><path d="M1734.3 65.7 L1743.7 56.3"/>
<path d="M1755.5 53.5 V69 M1788.5 53.5 V69 M1883.5 53.5 V69" stroke="#46536f" stroke-width="1"/>
<path d="M1774.3 54.7 A6.9 6.9 0 1 1 1767.2 56.1" stroke="#d0d4e2"/>
<path d="M1764.6 53.9 H1769.1 V58.3" stroke="#d0d4e2" stroke-width="1.4"/>
<circle cx="1771.9" cy="61.3" r="3" fill="#1fce92" stroke="none"/>
<rect x="1799.7" y="61.3" width="10.6" height="6.1" rx="0.6" stroke="#aab4d6" stroke-width="1.3"/>
<path d="M1801.7 61.3 V57.9 A3.35 3.35 0 0 1 1808.4 57.9 V61.3" stroke="#aab4d6" stroke-width="1.3"/>
<path d="M1898.93 56.53 L1899.06 54.37 L1900.94 54.37 L1901.07 56.53 L1902.40 57.08 L1904.02 55.64 L1905.36 56.98 L1903.92 58.60 L1904.47 59.93 L1906.63 60.06 L1906.63 61.94 L1904.47 62.07 L1903.92 63.40 L1905.36 65.02 L1904.02 66.36 L1902.40 64.92 L1901.07 65.47 L1900.94 67.63 L1899.06 67.63 L1898.93 65.47 L1897.60 64.92 L1895.98 66.36 L1894.64 65.02 L1896.08 63.40 L1895.53 62.07 L1893.37 61.94 L1893.37 60.06 L1895.53 59.93 L1896.08 58.60 L1894.64 56.98 L1895.98 55.64 L1897.60 57.08 Z" stroke-linejoin="round"/><circle cx="1900" cy="61" r="1.7"/>
</svg>
<svg class="ico" style="left:51px;top:82px" width="36" height="70" viewBox="51 82 36 70" fill="none" stroke="#c5cbdc" stroke-width="1">
<path d="M66.2 91 L68.6 93.6 L64.6 97.5 L62.2 94.9 Z"/>
<path d="M66.3 96 V102.8 H71.4 M66.3 98.3 H71.2"/>
<path d="M74 95 L75.7 96.8 L73 99.6 L71.3 97.8 Z"/>
<path d="M74 100.5 L75.7 102.3 L73 105.1 L71.3 103.3 Z"/>
<circle cx="69" cy="133.9" r="6.6"/>
<path d="M69 133.2 V137.3" stroke-width="1.5"/><circle cx="69" cy="130.9" r="0.9" fill="#c5cbdc" stroke="none"/>
</svg>
<svg class="ico" style="left:895px;top:82px" width="70" height="34" viewBox="895 82 70 34" fill="none" stroke="#e2e5ef" stroke-width="1.1">
<rect x="903.5" y="92.5" width="6" height="2"/><path d="M912 93.4 H917"/>
<path d="M903 97.5 H912 M914 97.5 H916"/>
<path d="M903 100.5 H909 M912 100.5 H917"/>
<path d="M903 103.5 H914"/>
<path d="M944.6 92.8 L951.8 98 L944.6 103.2 Z" stroke="#ecc9dd" stroke-width="1.2" stroke-linejoin="round"/>
</svg>
<svg class="ico" style="left:192px;top:118px" width="14" height="14" viewBox="192 118 14 14" fill="none" stroke="#d9dde8" stroke-width="1">
<path d="M195.5 121.5 L202.5 125.5 L195.5 129.5 Z" stroke-linejoin="round"/></svg>
<svg class="ico" style="left:1584px;top:88px" width="20" height="20" viewBox="1584 88 20 20" fill="none" stroke="#1fc98f" stroke-width="1.2">
<circle cx="1594" cy="98" r="6.8"/><path d="M1590.8 98.2 L1593 100.4 L1597.4 95.8"/></svg>
<svg class="ico" style="left:1888px;top:90px" width="20" height="16" viewBox="1888 90 20 16" fill="none" stroke="#d5d9e6" stroke-width="1.1">
<path d="M1893.2 96.2 L1898 101 L1902.8 96.2"/></svg>
<svg class="ico" style="left:970px;top:860px" width="30" height="160" viewBox="970 860 30 160" fill="none" stroke="#d5d9e6" stroke-width="1.1">
<path d="M977.2 868.6 L983.6 874.8 L990 868.6 M977.2 874.6 L983.6 880.8 L990 874.6"/>
<path d="M978 929 L986 937 M986 929 L978 937" stroke="#8e97b0"/>
<path d="M978 966 L986 974 M986 966 L978 974" stroke="#e9ecf3" stroke-width="1.3"/>
<path d="M978 1003 L986 1011 M986 1003 L978 1011" stroke="#8e97b0"/>
</svg>
<svg class="ico" style="left:1830px;top:860px" width="85" height="30" viewBox="1830 860 85 30" fill="none" stroke="#d5d9e6" stroke-width="1.1">
<rect x="1837.5" y="868.5" width="13" height="13"/><path d="M1840.2 872.4 L1843.7 875.6 L1840.2 878.8"/>
<circle cx="1872" cy="875" r="6.6"/><path d="M1867.3 879.7 L1876.7 870.3"/>
<path d="M1893.2 868.5 L1899.5 874.7 L1905.8 868.5 M1893.2 874.6 L1899.5 880.8 L1905.8 874.6"/>
</svg>
<svg class="ico" style="left:70px;top:1058px" width="110" height="22" viewBox="70 1058 110 22" fill="none" stroke-width="1.1">
<circle cx="83.9" cy="1069.1" r="5.7" stroke="#e0244f"/><path d="M81.6 1066.8 L86.2 1071.4 M86.2 1066.8 L81.6 1071.4" stroke="#e0244f"/>
<circle cx="120.8" cy="1069.1" r="5.7" stroke="#2f9fd8"/><path d="M120.8 1068.4 V1072" stroke="#2f9fd8" stroke-width="1.4"/><circle cx="120.8" cy="1066.4" r="0.8" fill="#2f9fd8"/>
<path d="M158 1063.8 L163.6 1074 H152.4 Z" stroke="#b8bccb" stroke-linejoin="round"/><path d="M158 1067.5 V1071" stroke="#b8bccb" stroke-width="1.2"/><circle cx="158" cy="1072.5" r="0.6" fill="#b8bccb"/>
</svg>
<svg class="ico" style="left:1745px;top:1058px" width="170" height="22" viewBox="1745 1058 170 22" fill="none" stroke-width="1.1">
<circle cx="1753.9" cy="1068.9" r="5.7" stroke="#1fc98f"/><path d="M1751.2 1069.1 L1753.1 1071 L1756.8 1067.1" stroke="#1fc98f"/>
<rect x="1870.5" y="1064.8" width="10" height="7.6" rx="0.8" stroke="#aeb5c8"/><path d="M1872 1067 H1879 M1872 1068.8 H1879 M1873.2 1070.8 H1877.8" stroke="#aeb5c8" stroke-width="0.9" stroke-dasharray="1 0.6"/>
<circle cx="1900.5" cy="1068.7" r="5.5" stroke="#d5d9e6"/>
</svg>
<div class="txt" style="left:90px;top:20px;font-size:12px;color:#e4e7f0;-webkit-text-stroke:0.45px;transform:scaleX(1.0288);transform-origin:0 0">untitled 1</div>
<div class="txt" style="left:59px;top:56px;font-size:12px;color:#e9ecf3;transform:scaleX(1.0153);transform-origin:0 0">Operation</div>
<div class="txt" style="left:128.7px;top:56px;font-size:12px;color:#b4bcd1;transform:scaleX(0.9382);transform-origin:0 0">Schema</div>
<div class="txt" style="left:1820.8px;top:56px;font-size:12px;color:#dfe3ee;transform:scaleX(0.9011);transform-origin:0 0">api.xoap.io</div>
<div class="txt" style="left:96.2px;top:92px;font-size:14px;color:#e3e6ee;transform:scaleX(0.9455);transform-origin:0 0">Request</div>
<div class="txt" style="left:964px;top:93px;font-size:12px;color:#f3d6e5;transform:scaleX(0.9086);transform-origin:0 0">Run</div>
<div class="txt" style="left:172px;top:120px;font-size:11px;color:#d9dde8;transform:scaleX(0.8921);transform-origin:0 0">Run</div>
<div class="txt" style="left:1012.8px;top:92px;font-size:14px;color:#e3e6ee;transform:scaleX(0.9280);transform-origin:0 0">Response</div>
<div class="txt" style="left:1627.4px;top:86px;font-size:11px;color:#22cc96;-webkit-text-stroke:0.45px;transform:scaleX(0.9427);transform-origin:0 0">200</div>
<div class="txt" style="left:1622px;top:101px;font-size:11px;color:#c3c9da;transform:scaleX(0.9610);transform-origin:0 0">status</div>
<div class="txt" style="left:1691.8px;top:86px;font-size:11px;color:#e9ecf3;-webkit-text-stroke:0.45px;transform:scaleX(0.9676);transform-origin:0 0">920 ms</div>
<div class="txt" style="left:1688.8px;top:101px;font-size:11px;color:#c3c9da;transform:scaleX(1.0290);transform-origin:0 0">duration</div>
<div class="txt" style="left:1768.3px;top:86px;font-size:11px;color:#e9ecf3;-webkit-text-stroke:0.45px;transform:scaleX(0.9637);transform-origin:0 0">983 B</div>
<div class="txt" style="left:1773.2px;top:101px;font-size:11px;color:#c3c9da;transform:scaleX(0.9151);transform-origin:0 0">size</div>
<div class="txt" style="left:1830.5px;top:90.5px;font-size:13px;color:#e9ecf3;transform:scaleX(1.0165);transform-origin:0 0">{ }</div>
<div class="txt" style="left:1853px;top:91.5px;font-size:13px;color:#e9ecf3;transform:scaleX(0.8162);transform-origin:0 0">JSON</div>
<div class="txt" style="left:96px;top:870px;font-size:12px;color:#b4bcd1;transform:scaleX(0.9647);transform-origin:0 0">GraphQL Variables</div>
<div class="txt" style="left:209.7px;top:870px;font-size:12px;color:#e9ecf3;transform:scaleX(0.9398);transform-origin:0 0">HTTP Headers</div>
<div class="txt" style="left:132.2px;top:899px;font-size:12px;color:#d5d9e6;transform:scaleX(0.9872);transform-origin:0 0">Name</div>
<div class="txt" style="left:387.3px;top:899px;font-size:12px;color:#d5d9e6;transform:scaleX(1.0067);transform-origin:0 0">Value</div>
<div class="txt" style="left:140.2px;top:926.5px;font-size:13px;color:#dfe3ee;transform:scaleX(0.9423);transform-origin:0 0">Authorization</div>
<div class="txt" style="left:140.2px;top:963.5px;font-size:13px;color:#dfe3ee;transform:scaleX(0.8917);transform-origin:0 0">Tenant</div>
<div class="txt" style="left:140.5px;top:1000.5px;font-size:13px;color:#99a3bd;transform:scaleX(0.8882);transform-origin:0 0">Name</div>
<div class="txt" style="left:395.5px;top:1000.5px;font-size:13px;color:#99a3bd;transform:scaleX(0.8983);transform-origin:0 0">Value</div>
<div class="txt" style="left:1012.6px;top:869px;font-size:14px;color:#e3e6ee;transform:scaleX(0.9224);transform-origin:0 0">Responses</div>
<div class="txt" style="left:30.2px;top:1063.5px;font-size:12px;color:#e4e7f0;transform:scaleX(0.9918);transform-origin:0 0">Online</div>
<div class="txt" style="left:95px;top:1063.5px;font-size:12px;color:#e4e7f0;transform:scaleX(0.9591);transform-origin:0 0">36</div>
<div class="txt" style="left:132px;top:1063.5px;font-size:12px;color:#e4e7f0;transform:scaleX(0.9216);transform-origin:0 0">34</div>
<div class="txt" style="left:168.75px;top:1063.5px;font-size:12px;color:#e4e7f0;transform:scaleX(0.8617);transform-origin:0 0">0</div>
<div class="txt" style="left:1765.5px;top:1063.5px;font-size:12px;color:#e4e7f0;transform:scaleX(0.9544);transform-origin:0 0">Schema available</div>
<div class="txt" style="left:1898.2px;top:1064.5px;font-size:9px;color:#d5d9e6">?</div>
<!-- status bar -->
<svg class="ico" style="left:10px;top:1060px" width="18" height="18" viewBox="10 1060 18 18"><circle cx="19" cy="1069.1" r="3.6" fill="#1fce92"/></svg>
</body>
</html>
